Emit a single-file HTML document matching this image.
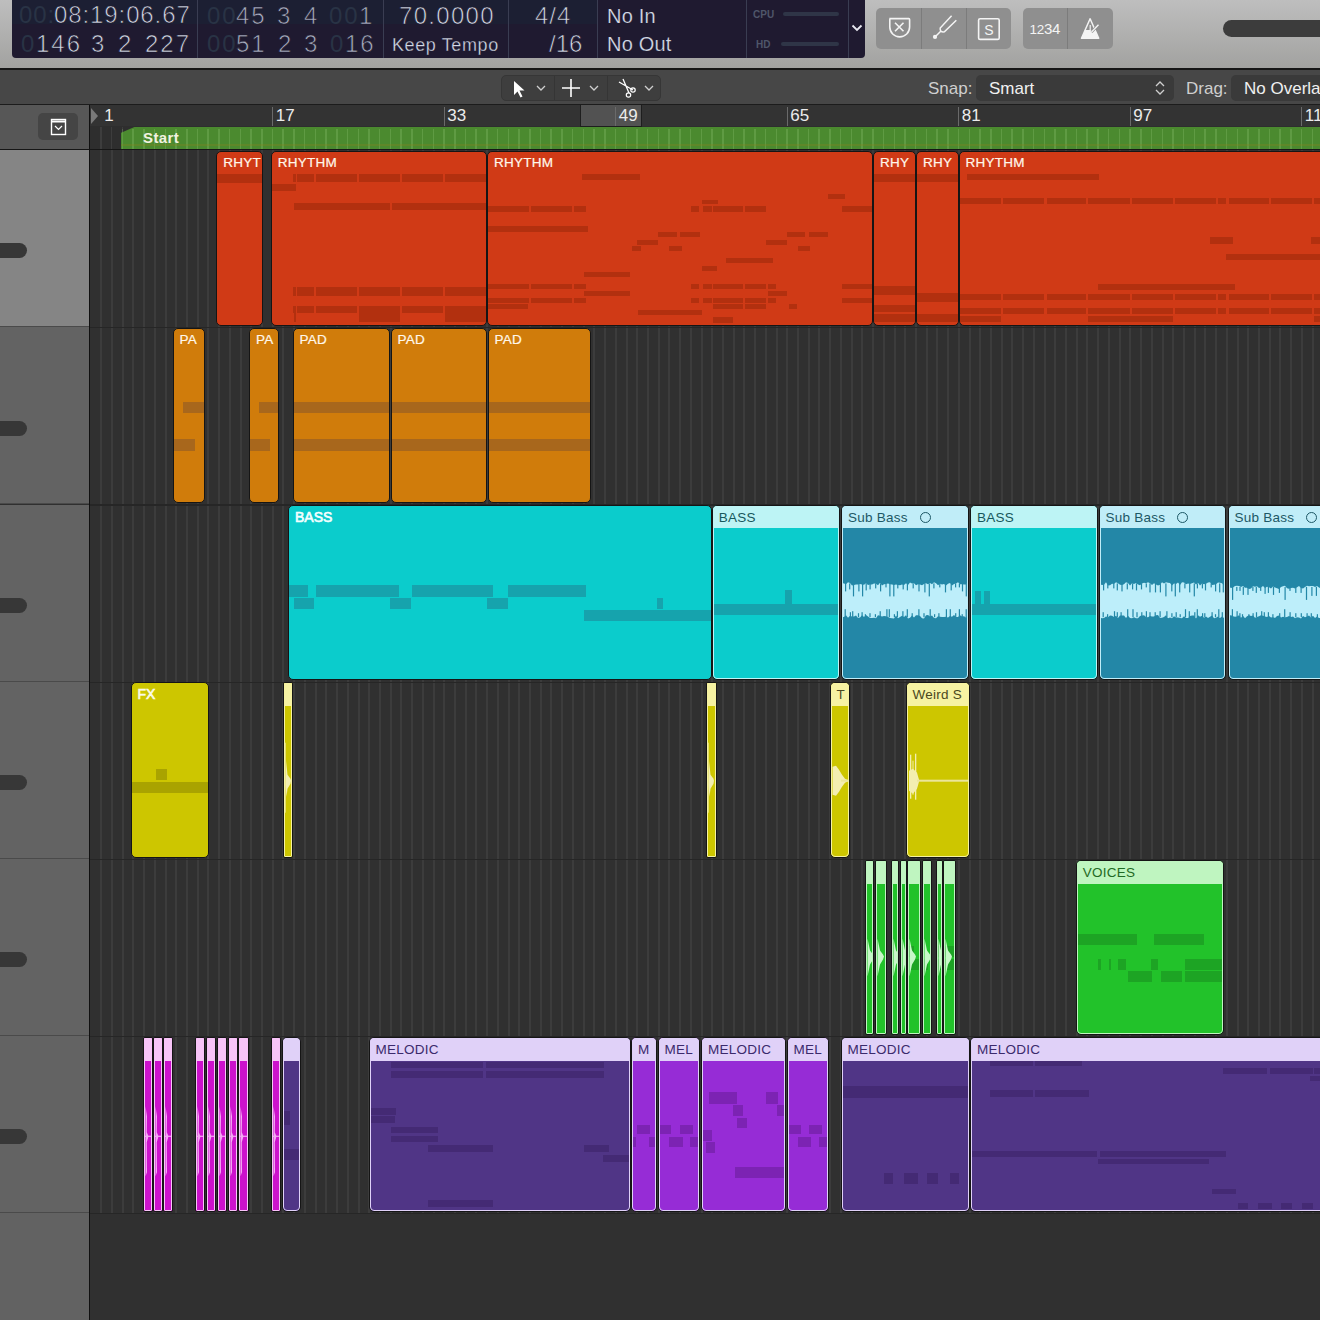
<!DOCTYPE html><html><head><meta charset="utf-8"><style>
*{margin:0;padding:0;box-sizing:border-box}
html,body{width:1320px;height:1320px;overflow:hidden;background:#303030;font-family:"Liberation Sans",sans-serif}
.a{position:absolute}
.lcd{color:#cfd6e4;font-size:22px;white-space:pre;line-height:1;-webkit-text-stroke:0.7px #1e1a30}
.dim{color:#2b3547}
.reg{position:absolute;border:1px solid #141414;border-radius:5px;overflow:hidden}
.rt{position:absolute;left:6px;top:3px;font-size:13.5px;letter-spacing:0.25px;line-height:16px;white-space:nowrap;-webkit-text-stroke:0.2px currentColor}
.hd .rt{top:4px;-webkit-text-stroke:0}
.n{position:absolute}
</style></head><body>
<div class="a" style="left:0;top:0;width:1320px;height:68px;background:linear-gradient(#bebebe,#a2a2a0)"></div>
<div class="a" style="left:0;top:68px;width:1320px;height:2px;background:#161616"></div>
<div class="a" style="left:12px;top:0;width:853px;height:58px;background:#1f1a30;border-radius:0 0 4px 4px"></div>
<div class="a" style="left:12px;top:0;width:585px;height:24px;background:#1c1f33"></div>
<div class="a" style="left:197px;top:0;width:1px;height:58px;background:#3a3d52"></div>
<div class="a" style="left:383px;top:0;width:1px;height:58px;background:#3a3d52"></div>
<div class="a" style="left:508px;top:0;width:1px;height:58px;background:#3a3d52"></div>
<div class="a" style="left:597px;top:0;width:1px;height:58px;background:#3a3d52"></div>
<div class="a" style="left:746px;top:0;width:1px;height:58px;background:#3a3d52"></div>
<div class="a" style="left:848px;top:0;width:1px;height:58px;background:#3a3d52"></div>
<div class="a lcd" style="left:19px;top:3px;font-size:24px;letter-spacing:0.9px;color:#293345;-webkit-text-stroke:0px #1e1a30">00:</div>
<div class="a lcd" style="left:54px;top:3px;font-size:24px;letter-spacing:0.9px;color:#d3d9e6;-webkit-text-stroke:0.7px #1e1a30">08:19:06.67</div>
<div class="a lcd" style="left:21px;top:32px;font-size:24px;letter-spacing:1px;color:#293345;-webkit-text-stroke:0px #1e1a30">0</div>
<div class="a lcd" style="left:36px;top:32px;font-size:24px;letter-spacing:2px;color:#d3d9e6;-webkit-text-stroke:0.7px #1e1a30">146</div>
<div class="a lcd" style="left:91px;top:32px;font-size:24px;letter-spacing:1.0px;color:#d3d9e6;-webkit-text-stroke:0.7px #1e1a30">3</div>
<div class="a lcd" style="left:118px;top:32px;font-size:24px;letter-spacing:1.0px;color:#d3d9e6;-webkit-text-stroke:0.7px #1e1a30">2</div>
<div class="a lcd" style="left:145px;top:32px;font-size:24px;letter-spacing:2px;color:#d3d9e6;-webkit-text-stroke:0.7px #1e1a30">227</div>
<div class="a lcd" style="left:207px;top:4px;font-size:24px;letter-spacing:2px;color:#293345;-webkit-text-stroke:0px #1e1a30">00</div>
<div class="a lcd" style="left:236px;top:4px;font-size:24px;letter-spacing:2px;color:#a9afc2;-webkit-text-stroke:0.7px #1e1a30">45</div>
<div class="a lcd" style="left:277px;top:4px;font-size:24px;letter-spacing:1px;color:#a9afc2;-webkit-text-stroke:0.7px #1e1a30">3</div>
<div class="a lcd" style="left:304px;top:4px;font-size:24px;letter-spacing:1px;color:#a9afc2;-webkit-text-stroke:0.7px #1e1a30">4</div>
<div class="a lcd" style="left:329px;top:4px;font-size:24px;letter-spacing:2px;color:#293345;-webkit-text-stroke:0px #1e1a30">00</div>
<div class="a lcd" style="left:359px;top:4px;font-size:24px;letter-spacing:1px;color:#a9afc2;-webkit-text-stroke:0.7px #1e1a30">1</div>
<div class="a lcd" style="left:207px;top:32px;font-size:24px;letter-spacing:2px;color:#293345;-webkit-text-stroke:0px #1e1a30">00</div>
<div class="a lcd" style="left:236px;top:32px;font-size:24px;letter-spacing:2px;color:#a9afc2;-webkit-text-stroke:0.7px #1e1a30">51</div>
<div class="a lcd" style="left:278px;top:32px;font-size:24px;letter-spacing:1px;color:#a9afc2;-webkit-text-stroke:0.7px #1e1a30">2</div>
<div class="a lcd" style="left:304px;top:32px;font-size:24px;letter-spacing:1px;color:#a9afc2;-webkit-text-stroke:0.7px #1e1a30">3</div>
<div class="a lcd" style="left:330px;top:32px;font-size:24px;letter-spacing:1px;color:#293345;-webkit-text-stroke:0px #1e1a30">0</div>
<div class="a lcd" style="left:345px;top:32px;font-size:24px;letter-spacing:2px;color:#a9afc2;-webkit-text-stroke:0.7px #1e1a30">16</div>
<div class="a lcd" style="left:399px;top:4px;font-size:24px;letter-spacing:1.3px;color:#d3d9e6;-webkit-text-stroke:0.7px #1e1a30">70.0000</div>
<div class="a lcd" style="left:392px;top:36px;font-size:18px;letter-spacing:0.6px;color:#d3d9e6;-webkit-text-stroke:0.3px #1e1a30">Keep Tempo</div>
<div class="a lcd" style="left:535px;top:4px;font-size:24px;letter-spacing:1px;color:#d3d9e6;-webkit-text-stroke:0.7px #1e1a30">4/4</div>
<div class="a lcd" style="left:549px;top:32px;font-size:24px;letter-spacing:0px;color:#d3d9e6;-webkit-text-stroke:0.7px #1e1a30">/16</div>
<div class="a lcd" style="left:607px;top:6px;font-size:20px;letter-spacing:0.2px;color:#d3d9e6;-webkit-text-stroke:0.2px #1e1a30">No In</div>
<div class="a lcd" style="left:607px;top:34px;font-size:20px;letter-spacing:0.2px;color:#d3d9e6;-webkit-text-stroke:0.2px #1e1a30">No Out</div>
<div class="a" style="left:753px;top:9px;font-size:10px;color:#4f566a;font-weight:bold">CPU</div>
<div class="a" style="left:756px;top:39px;font-size:10px;color:#4f566a;font-weight:bold">HD</div>
<div class="a" style="left:783px;top:12px;width:56px;height:4px;background:#2f3547;border-radius:2px"></div>
<div class="a" style="left:781px;top:42px;width:58px;height:4px;background:#2f3547;border-radius:2px"></div>
<svg class="a" style="left:851px;top:23px" width="12" height="10"><path d="M1.5 2.5 L6 7 L10.5 2.5" stroke="#e8e8f0" stroke-width="1.8" fill="none"/></svg>
<div class="a" style="left:876px;top:8px;width:135px;height:41px;background:#8f8f8f;border-radius:5px"></div>
<div class="a" style="left:1023px;top:8px;width:90px;height:41px;background:#8f8f8f;border-radius:5px"></div>
<div class="a" style="left:921px;top:8px;width:1px;height:41px;background:#7c7c7c"></div>
<div class="a" style="left:966px;top:8px;width:1px;height:41px;background:#7c7c7c"></div>
<div class="a" style="left:1067px;top:8px;width:1px;height:41px;background:#7c7c7c"></div>
<svg class="a" style="left:876px;top:8px" width="237" height="41">
<path d="M13.3 10.6 h19.5 q0.8 0 0.8 0.8 v7.6 a9.9 9.9 0 0 1 -19.8 0 v-7.6 q0 -0.8 0.8 -0.8 z" stroke="#f4f4f4" stroke-width="1.6" fill="none"/>
<path d="M19 14.8 l8.5 8.5 M27.5 14.8 l-8.5 8.5" stroke="#f4f4f4" stroke-width="1.6"/>
<circle cx="59" cy="28.9" r="2.1" fill="#f4f4f4"/>
<path d="M59 29 L65.2 22.8" stroke="#f4f4f4" stroke-width="1.5"/>
<path d="M75.6 7.8 L64.2 20 Q63.6 24.6 68.4 23.8 L80.3 12.2" stroke="#f4f4f4" stroke-width="1.5" fill="none"/>
<rect x="102.6" y="10.8" width="20.6" height="20.6" rx="1.5" stroke="#f4f4f4" stroke-width="1.6" fill="none"/>
<text x="113" y="26.5" font-size="14" text-anchor="middle" fill="#f4f4f4" font-family="Liberation Sans">S</text>
<text x="153.5" y="26" font-size="15" letter-spacing="-0.3" fill="#f4f4f4" font-family="Liberation Sans"><tspan font-size="13.5">12</tspan>34</text>
<path d="M214.1 10.8 L205.5 30.2 L222.7 30.2 Z" stroke="#f4f4f4" stroke-width="1.5" fill="none" stroke-linejoin="round"/>
<path d="M209.2 22 L219 22 L222.7 30.4 L205.5 30.4 Z" fill="#f4f4f4"/>
<path d="M214.2 17 v5" stroke="#f4f4f4" stroke-width="1.2"/>
<path d="M215.5 24 L222.5 16.8" stroke="#8f8f8f" stroke-width="2.6"/>
<path d="M215.5 24 L222.5 16.8" stroke="#f4f4f4" stroke-width="1.4"/>
</svg>
<div class="a" style="left:1223px;top:20px;width:120px;height:17px;background:#3c3c3c;border-radius:8.5px"></div>
<div class="a" style="left:0;top:70px;width:1320px;height:35px;background:#474747"></div>
<div class="a" style="left:0;top:104px;width:1320px;height:1px;background:#1c1c1c"></div>
<div class="a" style="left:501px;top:75px;width:160px;height:26px;background:#3e3e3e;border-radius:5px;border:1px solid #363636"></div>
<div class="a" style="left:554px;top:76px;width:1px;height:24px;background:#353535"></div>
<div class="a" style="left:607px;top:76px;width:1px;height:24px;background:#353535"></div>
<svg class="a" style="left:501px;top:75px" width="160" height="26">
<path d="M13 6 v14 l3.5 -3.5 l3 6 l2 -1 l-3 -6 h5 z" fill="#fff"/>
<path d="M36 11 l4 4 l4 -4" stroke="#cfcfcf" stroke-width="1.3" fill="none"/>
<path d="M70 4 v18 M61 13 h18" stroke="#fff" stroke-width="1.6"/>
<path d="M89 11 l4 4 l4 -4" stroke="#cfcfcf" stroke-width="1.3" fill="none"/>
<path d="M118 7 l14 8 M122 4 l6 14" stroke="#fff" stroke-width="1.3"/>
<circle cx="132" cy="15" r="2.2" stroke="#fff" stroke-width="1.2" fill="none"/>
<circle cx="127.5" cy="20" r="2.2" stroke="#fff" stroke-width="1.2" fill="none"/>
<path d="M144 11 l4 4 l4 -4" stroke="#cfcfcf" stroke-width="1.3" fill="none"/>
</svg>
<div class="a" style="left:928px;top:79px;font-size:17px;color:#cfcfcf">Snap:</div>
<div class="a" style="left:976px;top:75px;width:198px;height:26px;background:#3a3a3a;border-radius:5px"></div>
<div class="a" style="left:989px;top:79px;font-size:17px;color:#f0f0f0">Smart</div>
<svg class="a" style="left:1153px;top:79px" width="14" height="18"><path d="M3 7 l4 -4 l4 4 M3 11 l4 4 l4 -4" stroke="#cfcfcf" stroke-width="1.3" fill="none"/></svg>
<div class="a" style="left:1186px;top:79px;font-size:17px;color:#cfcfcf">Drag:</div>
<div class="a" style="left:1231px;top:75px;width:120px;height:26px;background:#3a3a3a;border-radius:5px"></div>
<div class="a" style="left:1244px;top:79px;font-size:17px;color:#f0f0f0;white-space:nowrap">No Overlap</div>
<div class="a" style="left:0;top:105px;width:89px;height:45px;background:#575757"></div>
<div class="a" style="left:38px;top:113px;width:40px;height:27px;background:#454545;border-radius:5px"></div>
<svg class="a" style="left:38px;top:113px" width="40" height="27"><rect x="13.5" y="6.5" width="14" height="15" stroke="#fff" stroke-width="1.4" fill="none"/><path d="M13.5 8.5 h14" stroke="#fff" stroke-width="2"/><path d="M17 13 l3.5 3.5 l3.5 -3.5" stroke="#fff" stroke-width="1.2" fill="none"/></svg>
<div class="a" style="left:89px;top:105px;width:1px;height:1215px;background:#101010"></div>
<div class="a" style="left:0;top:149px;width:1320px;height:1px;background:#161616"></div>
<div class="a" style="left:0;top:150.1px;width:89px;height:177.2px;background:#858585"></div>
<div class="a" style="left:0;top:326.1px;width:89px;height:1.2px;background:#4a4a4a"></div>
<div class="a" style="left:-8px;top:243.3px;width:35px;height:15px;background:#373737;border-radius:7.5px"></div>
<div class="a" style="left:0;top:327.3px;width:89px;height:177.2px;background:#636363"></div>
<div class="a" style="left:0;top:503.3px;width:89px;height:1.2px;background:#4a4a4a"></div>
<div class="a" style="left:-8px;top:420.5px;width:35px;height:15px;background:#373737;border-radius:7.5px"></div>
<div class="a" style="left:0;top:504.5px;width:89px;height:177.2px;background:#636363"></div>
<div class="a" style="left:0;top:680.5px;width:89px;height:1.2px;background:#4a4a4a"></div>
<div class="a" style="left:-8px;top:597.7px;width:35px;height:15px;background:#373737;border-radius:7.5px"></div>
<div class="a" style="left:0;top:681.7px;width:89px;height:177.2px;background:#636363"></div>
<div class="a" style="left:0;top:857.7px;width:89px;height:1.2px;background:#4a4a4a"></div>
<div class="a" style="left:-8px;top:774.9px;width:35px;height:15px;background:#373737;border-radius:7.5px"></div>
<div class="a" style="left:0;top:858.9px;width:89px;height:177.2px;background:#636363"></div>
<div class="a" style="left:0;top:1034.9px;width:89px;height:1.2px;background:#4a4a4a"></div>
<div class="a" style="left:-8px;top:952.1px;width:35px;height:15px;background:#373737;border-radius:7.5px"></div>
<div class="a" style="left:0;top:1036.1px;width:89px;height:177.2px;background:#636363"></div>
<div class="a" style="left:0;top:1212.1px;width:89px;height:1.2px;background:#4a4a4a"></div>
<div class="a" style="left:-8px;top:1129.3px;width:35px;height:15px;background:#373737;border-radius:7.5px"></div>
<div class="a" style="left:0;top:1213.3px;width:89px;height:200px;background:#626262"></div>
<div class="a" style="left:90px;top:105px;width:1230px;height:21px;background:#333333"></div>
<div class="a" style="left:90px;top:126px;width:1230px;height:23px;background:#2e2e2e"></div>
<div class="a" style="left:100.2px;top:127px;width:1.5px;height:22px;background:#3d3d3d"></div><div class="a" style="left:110.9px;top:127px;width:1.5px;height:22px;background:#3d3d3d"></div><div class="a" style="left:121.6px;top:127px;width:1.5px;height:22px;background:#3d3d3d"></div>
<div class="a" style="left:580px;top:105px;width:62px;height:22px;background:#525252;border:1px solid #1e1e1e;border-top:none"></div>
<div class="a" style="left:104.2px;top:105.6px;font-size:17px;line-height:20px;color:#ececec">1</div>
<div class="a" style="left:272.2px;top:107px;width:1px;height:19px;background:#6a6a6a"></div>
<div class="a" style="left:275.7px;top:105.6px;font-size:17px;line-height:20px;color:#ececec">17</div>
<div class="a" style="left:443.7px;top:107px;width:1px;height:19px;background:#6a6a6a"></div>
<div class="a" style="left:447.2px;top:105.6px;font-size:17px;line-height:20px;color:#ececec">33</div>
<div class="a" style="left:615.3px;top:107px;width:1px;height:19px;background:#6a6a6a"></div>
<div class="a" style="left:618.8px;top:105.6px;font-size:17px;line-height:20px;color:#ececec">49</div>
<div class="a" style="left:786.8px;top:107px;width:1px;height:19px;background:#6a6a6a"></div>
<div class="a" style="left:790.3px;top:105.6px;font-size:17px;line-height:20px;color:#ececec">65</div>
<div class="a" style="left:958.3px;top:107px;width:1px;height:19px;background:#6a6a6a"></div>
<div class="a" style="left:961.8px;top:105.6px;font-size:17px;line-height:20px;color:#ececec">81</div>
<div class="a" style="left:1129.8px;top:107px;width:1px;height:19px;background:#6a6a6a"></div>
<div class="a" style="left:1133.3px;top:105.6px;font-size:17px;line-height:20px;color:#ececec">97</div>
<div class="a" style="left:1301.3px;top:107px;width:1px;height:19px;background:#6a6a6a"></div>
<div class="a" style="left:1304.8px;top:105.6px;font-size:17px;line-height:20px;color:#ececec">113</div>
<svg class="a" style="left:90px;top:107px" width="10" height="18"><path d="M1 1 L8 9 L1 17 z" fill="#7a7a7a"/></svg>
<div class="a" style="left:120.5px;top:126.5px;width:1200px;height:22.5px;background:#4b8a2f;clip-path:polygon(0 6.5px,15px 0,100% 0,100% 100%,0 100%)"></div>
<div class="a" style="left:121.6px;top:129px;width:1.5px;height:20px;background:rgba(170,220,140,0.22)"></div><div class="a" style="left:132.4px;top:129px;width:1.5px;height:20px;background:rgba(170,220,140,0.22)"></div><div class="a" style="left:143.1px;top:129px;width:1.5px;height:20px;background:rgba(170,220,140,0.22)"></div><div class="a" style="left:153.8px;top:129px;width:1.5px;height:20px;background:rgba(170,220,140,0.22)"></div><div class="a" style="left:164.5px;top:129px;width:1.5px;height:20px;background:rgba(170,220,140,0.22)"></div><div class="a" style="left:175.2px;top:129px;width:1.5px;height:20px;background:rgba(170,220,140,0.22)"></div><div class="a" style="left:186.0px;top:129px;width:1.5px;height:20px;background:rgba(170,220,140,0.22)"></div><div class="a" style="left:196.7px;top:129px;width:1.5px;height:20px;background:rgba(170,220,140,0.22)"></div><div class="a" style="left:207.4px;top:129px;width:1.5px;height:20px;background:rgba(170,220,140,0.22)"></div><div class="a" style="left:218.1px;top:129px;width:1.5px;height:20px;background:rgba(170,220,140,0.22)"></div><div class="a" style="left:228.8px;top:129px;width:1.5px;height:20px;background:rgba(170,220,140,0.22)"></div><div class="a" style="left:239.6px;top:129px;width:1.5px;height:20px;background:rgba(170,220,140,0.22)"></div><div class="a" style="left:250.3px;top:129px;width:1.5px;height:20px;background:rgba(170,220,140,0.22)"></div><div class="a" style="left:261.0px;top:129px;width:1.5px;height:20px;background:rgba(170,220,140,0.22)"></div><div class="a" style="left:271.7px;top:129px;width:1.5px;height:20px;background:rgba(170,220,140,0.22)"></div><div class="a" style="left:282.4px;top:129px;width:1.5px;height:20px;background:rgba(170,220,140,0.22)"></div><div class="a" style="left:293.2px;top:129px;width:1.5px;height:20px;background:rgba(170,220,140,0.22)"></div><div class="a" style="left:303.9px;top:129px;width:1.5px;height:20px;background:rgba(170,220,140,0.22)"></div><div class="a" style="left:314.6px;top:129px;width:1.5px;height:20px;background:rgba(170,220,140,0.22)"></div><div class="a" style="left:325.3px;top:129px;width:1.5px;height:20px;background:rgba(170,220,140,0.22)"></div><div class="a" style="left:336.0px;top:129px;width:1.5px;height:20px;background:rgba(170,220,140,0.22)"></div><div class="a" style="left:346.8px;top:129px;width:1.5px;height:20px;background:rgba(170,220,140,0.22)"></div><div class="a" style="left:357.5px;top:129px;width:1.5px;height:20px;background:rgba(170,220,140,0.22)"></div><div class="a" style="left:368.2px;top:129px;width:1.5px;height:20px;background:rgba(170,220,140,0.22)"></div><div class="a" style="left:378.9px;top:129px;width:1.5px;height:20px;background:rgba(170,220,140,0.22)"></div><div class="a" style="left:389.6px;top:129px;width:1.5px;height:20px;background:rgba(170,220,140,0.22)"></div><div class="a" style="left:400.4px;top:129px;width:1.5px;height:20px;background:rgba(170,220,140,0.22)"></div><div class="a" style="left:411.1px;top:129px;width:1.5px;height:20px;background:rgba(170,220,140,0.22)"></div><div class="a" style="left:421.8px;top:129px;width:1.5px;height:20px;background:rgba(170,220,140,0.22)"></div><div class="a" style="left:432.5px;top:129px;width:1.5px;height:20px;background:rgba(170,220,140,0.22)"></div><div class="a" style="left:443.2px;top:129px;width:1.5px;height:20px;background:rgba(170,220,140,0.22)"></div><div class="a" style="left:454.0px;top:129px;width:1.5px;height:20px;background:rgba(170,220,140,0.22)"></div><div class="a" style="left:464.7px;top:129px;width:1.5px;height:20px;background:rgba(170,220,140,0.22)"></div><div class="a" style="left:475.4px;top:129px;width:1.5px;height:20px;background:rgba(170,220,140,0.22)"></div><div class="a" style="left:486.1px;top:129px;width:1.5px;height:20px;background:rgba(170,220,140,0.22)"></div><div class="a" style="left:496.8px;top:129px;width:1.5px;height:20px;background:rgba(170,220,140,0.22)"></div><div class="a" style="left:507.6px;top:129px;width:1.5px;height:20px;background:rgba(170,220,140,0.22)"></div><div class="a" style="left:518.3px;top:129px;width:1.5px;height:20px;background:rgba(170,220,140,0.22)"></div><div class="a" style="left:529.0px;top:129px;width:1.5px;height:20px;background:rgba(170,220,140,0.22)"></div><div class="a" style="left:539.7px;top:129px;width:1.5px;height:20px;background:rgba(170,220,140,0.22)"></div><div class="a" style="left:550.4px;top:129px;width:1.5px;height:20px;background:rgba(170,220,140,0.22)"></div><div class="a" style="left:561.2px;top:129px;width:1.5px;height:20px;background:rgba(170,220,140,0.22)"></div><div class="a" style="left:571.9px;top:129px;width:1.5px;height:20px;background:rgba(170,220,140,0.22)"></div><div class="a" style="left:582.6px;top:129px;width:1.5px;height:20px;background:rgba(170,220,140,0.22)"></div><div class="a" style="left:593.3px;top:129px;width:1.5px;height:20px;background:rgba(170,220,140,0.22)"></div><div class="a" style="left:604.0px;top:129px;width:1.5px;height:20px;background:rgba(170,220,140,0.22)"></div><div class="a" style="left:614.8px;top:129px;width:1.5px;height:20px;background:rgba(170,220,140,0.22)"></div><div class="a" style="left:625.5px;top:129px;width:1.5px;height:20px;background:rgba(170,220,140,0.22)"></div><div class="a" style="left:636.2px;top:129px;width:1.5px;height:20px;background:rgba(170,220,140,0.22)"></div><div class="a" style="left:646.9px;top:129px;width:1.5px;height:20px;background:rgba(170,220,140,0.22)"></div><div class="a" style="left:657.6px;top:129px;width:1.5px;height:20px;background:rgba(170,220,140,0.22)"></div><div class="a" style="left:668.4px;top:129px;width:1.5px;height:20px;background:rgba(170,220,140,0.22)"></div><div class="a" style="left:679.1px;top:129px;width:1.5px;height:20px;background:rgba(170,220,140,0.22)"></div><div class="a" style="left:689.8px;top:129px;width:1.5px;height:20px;background:rgba(170,220,140,0.22)"></div><div class="a" style="left:700.5px;top:129px;width:1.5px;height:20px;background:rgba(170,220,140,0.22)"></div><div class="a" style="left:711.2px;top:129px;width:1.5px;height:20px;background:rgba(170,220,140,0.22)"></div><div class="a" style="left:722.0px;top:129px;width:1.5px;height:20px;background:rgba(170,220,140,0.22)"></div><div class="a" style="left:732.7px;top:129px;width:1.5px;height:20px;background:rgba(170,220,140,0.22)"></div><div class="a" style="left:743.4px;top:129px;width:1.5px;height:20px;background:rgba(170,220,140,0.22)"></div><div class="a" style="left:754.1px;top:129px;width:1.5px;height:20px;background:rgba(170,220,140,0.22)"></div><div class="a" style="left:764.8px;top:129px;width:1.5px;height:20px;background:rgba(170,220,140,0.22)"></div><div class="a" style="left:775.6px;top:129px;width:1.5px;height:20px;background:rgba(170,220,140,0.22)"></div><div class="a" style="left:786.3px;top:129px;width:1.5px;height:20px;background:rgba(170,220,140,0.22)"></div><div class="a" style="left:797.0px;top:129px;width:1.5px;height:20px;background:rgba(170,220,140,0.22)"></div><div class="a" style="left:807.7px;top:129px;width:1.5px;height:20px;background:rgba(170,220,140,0.22)"></div><div class="a" style="left:818.4px;top:129px;width:1.5px;height:20px;background:rgba(170,220,140,0.22)"></div><div class="a" style="left:829.2px;top:129px;width:1.5px;height:20px;background:rgba(170,220,140,0.22)"></div><div class="a" style="left:839.9px;top:129px;width:1.5px;height:20px;background:rgba(170,220,140,0.22)"></div><div class="a" style="left:850.6px;top:129px;width:1.5px;height:20px;background:rgba(170,220,140,0.22)"></div><div class="a" style="left:861.3px;top:129px;width:1.5px;height:20px;background:rgba(170,220,140,0.22)"></div><div class="a" style="left:872.0px;top:129px;width:1.5px;height:20px;background:rgba(170,220,140,0.22)"></div><div class="a" style="left:882.8px;top:129px;width:1.5px;height:20px;background:rgba(170,220,140,0.22)"></div><div class="a" style="left:893.5px;top:129px;width:1.5px;height:20px;background:rgba(170,220,140,0.22)"></div><div class="a" style="left:904.2px;top:129px;width:1.5px;height:20px;background:rgba(170,220,140,0.22)"></div><div class="a" style="left:914.9px;top:129px;width:1.5px;height:20px;background:rgba(170,220,140,0.22)"></div><div class="a" style="left:925.6px;top:129px;width:1.5px;height:20px;background:rgba(170,220,140,0.22)"></div><div class="a" style="left:936.4px;top:129px;width:1.5px;height:20px;background:rgba(170,220,140,0.22)"></div><div class="a" style="left:947.1px;top:129px;width:1.5px;height:20px;background:rgba(170,220,140,0.22)"></div><div class="a" style="left:957.8px;top:129px;width:1.5px;height:20px;background:rgba(170,220,140,0.22)"></div><div class="a" style="left:968.5px;top:129px;width:1.5px;height:20px;background:rgba(170,220,140,0.22)"></div><div class="a" style="left:979.2px;top:129px;width:1.5px;height:20px;background:rgba(170,220,140,0.22)"></div><div class="a" style="left:990.0px;top:129px;width:1.5px;height:20px;background:rgba(170,220,140,0.22)"></div><div class="a" style="left:1000.7px;top:129px;width:1.5px;height:20px;background:rgba(170,220,140,0.22)"></div><div class="a" style="left:1011.4px;top:129px;width:1.5px;height:20px;background:rgba(170,220,140,0.22)"></div><div class="a" style="left:1022.1px;top:129px;width:1.5px;height:20px;background:rgba(170,220,140,0.22)"></div><div class="a" style="left:1032.8px;top:129px;width:1.5px;height:20px;background:rgba(170,220,140,0.22)"></div><div class="a" style="left:1043.6px;top:129px;width:1.5px;height:20px;background:rgba(170,220,140,0.22)"></div><div class="a" style="left:1054.3px;top:129px;width:1.5px;height:20px;background:rgba(170,220,140,0.22)"></div><div class="a" style="left:1065.0px;top:129px;width:1.5px;height:20px;background:rgba(170,220,140,0.22)"></div><div class="a" style="left:1075.7px;top:129px;width:1.5px;height:20px;background:rgba(170,220,140,0.22)"></div><div class="a" style="left:1086.4px;top:129px;width:1.5px;height:20px;background:rgba(170,220,140,0.22)"></div><div class="a" style="left:1097.2px;top:129px;width:1.5px;height:20px;background:rgba(170,220,140,0.22)"></div><div class="a" style="left:1107.9px;top:129px;width:1.5px;height:20px;background:rgba(170,220,140,0.22)"></div><div class="a" style="left:1118.6px;top:129px;width:1.5px;height:20px;background:rgba(170,220,140,0.22)"></div><div class="a" style="left:1129.3px;top:129px;width:1.5px;height:20px;background:rgba(170,220,140,0.22)"></div><div class="a" style="left:1140.0px;top:129px;width:1.5px;height:20px;background:rgba(170,220,140,0.22)"></div><div class="a" style="left:1150.8px;top:129px;width:1.5px;height:20px;background:rgba(170,220,140,0.22)"></div><div class="a" style="left:1161.5px;top:129px;width:1.5px;height:20px;background:rgba(170,220,140,0.22)"></div><div class="a" style="left:1172.2px;top:129px;width:1.5px;height:20px;background:rgba(170,220,140,0.22)"></div><div class="a" style="left:1182.9px;top:129px;width:1.5px;height:20px;background:rgba(170,220,140,0.22)"></div><div class="a" style="left:1193.6px;top:129px;width:1.5px;height:20px;background:rgba(170,220,140,0.22)"></div><div class="a" style="left:1204.4px;top:129px;width:1.5px;height:20px;background:rgba(170,220,140,0.22)"></div><div class="a" style="left:1215.1px;top:129px;width:1.5px;height:20px;background:rgba(170,220,140,0.22)"></div><div class="a" style="left:1225.8px;top:129px;width:1.5px;height:20px;background:rgba(170,220,140,0.22)"></div><div class="a" style="left:1236.5px;top:129px;width:1.5px;height:20px;background:rgba(170,220,140,0.22)"></div><div class="a" style="left:1247.2px;top:129px;width:1.5px;height:20px;background:rgba(170,220,140,0.22)"></div><div class="a" style="left:1258.0px;top:129px;width:1.5px;height:20px;background:rgba(170,220,140,0.22)"></div><div class="a" style="left:1268.7px;top:129px;width:1.5px;height:20px;background:rgba(170,220,140,0.22)"></div><div class="a" style="left:1279.4px;top:129px;width:1.5px;height:20px;background:rgba(170,220,140,0.22)"></div><div class="a" style="left:1290.1px;top:129px;width:1.5px;height:20px;background:rgba(170,220,140,0.22)"></div><div class="a" style="left:1300.8px;top:129px;width:1.5px;height:20px;background:rgba(170,220,140,0.22)"></div><div class="a" style="left:1311.6px;top:129px;width:1.5px;height:20px;background:rgba(170,220,140,0.22)"></div><div class="a" style="left:1322.3px;top:129px;width:1.5px;height:20px;background:rgba(170,220,140,0.22)"></div><div class="a" style="left:1333.0px;top:129px;width:1.5px;height:20px;background:rgba(170,220,140,0.22)"></div>
<div class="a" style="left:121px;top:144px;width:1199px;height:1.5px;background:rgba(140,130,30,0.3)"></div>
<div class="a" style="left:143px;top:129px;font-size:15px;letter-spacing:0.4px;font-weight:bold;color:#f2f2e0;line-height:18px">Start</div>
<div class="a" style="left:100.2px;top:150px;width:2px;height:1063px;background:#3c3c3c"></div><div class="a" style="left:110.9px;top:150px;width:2px;height:1063px;background:#3c3c3c"></div><div class="a" style="left:121.6px;top:150px;width:2px;height:1063px;background:#3c3c3c"></div><div class="a" style="left:132.4px;top:150px;width:2px;height:1063px;background:#3c3c3c"></div><div class="a" style="left:143.1px;top:150px;width:2px;height:1063px;background:#3c3c3c"></div><div class="a" style="left:153.8px;top:150px;width:2px;height:1063px;background:#3c3c3c"></div><div class="a" style="left:164.5px;top:150px;width:2px;height:1063px;background:#3c3c3c"></div><div class="a" style="left:175.2px;top:150px;width:2px;height:1063px;background:#3c3c3c"></div><div class="a" style="left:186.0px;top:150px;width:2px;height:1063px;background:#3c3c3c"></div><div class="a" style="left:196.7px;top:150px;width:2px;height:1063px;background:#3c3c3c"></div><div class="a" style="left:207.4px;top:150px;width:2px;height:1063px;background:#3c3c3c"></div><div class="a" style="left:218.1px;top:150px;width:2px;height:1063px;background:#3c3c3c"></div><div class="a" style="left:228.8px;top:150px;width:2px;height:1063px;background:#3c3c3c"></div><div class="a" style="left:239.6px;top:150px;width:2px;height:1063px;background:#3c3c3c"></div><div class="a" style="left:250.3px;top:150px;width:2px;height:1063px;background:#3c3c3c"></div><div class="a" style="left:261.0px;top:150px;width:2px;height:1063px;background:#3c3c3c"></div><div class="a" style="left:271.7px;top:150px;width:2px;height:1063px;background:#3c3c3c"></div><div class="a" style="left:282.4px;top:150px;width:2px;height:1063px;background:#3c3c3c"></div><div class="a" style="left:293.2px;top:150px;width:2px;height:1063px;background:#3c3c3c"></div><div class="a" style="left:303.9px;top:150px;width:2px;height:1063px;background:#3c3c3c"></div><div class="a" style="left:314.6px;top:150px;width:2px;height:1063px;background:#3c3c3c"></div><div class="a" style="left:325.3px;top:150px;width:2px;height:1063px;background:#3c3c3c"></div><div class="a" style="left:336.0px;top:150px;width:2px;height:1063px;background:#3c3c3c"></div><div class="a" style="left:346.8px;top:150px;width:2px;height:1063px;background:#3c3c3c"></div><div class="a" style="left:357.5px;top:150px;width:2px;height:1063px;background:#3c3c3c"></div><div class="a" style="left:368.2px;top:150px;width:2px;height:1063px;background:#3c3c3c"></div><div class="a" style="left:378.9px;top:150px;width:2px;height:1063px;background:#3c3c3c"></div><div class="a" style="left:389.6px;top:150px;width:2px;height:1063px;background:#3c3c3c"></div><div class="a" style="left:400.4px;top:150px;width:2px;height:1063px;background:#3c3c3c"></div><div class="a" style="left:411.1px;top:150px;width:2px;height:1063px;background:#3c3c3c"></div><div class="a" style="left:421.8px;top:150px;width:2px;height:1063px;background:#3c3c3c"></div><div class="a" style="left:432.5px;top:150px;width:2px;height:1063px;background:#3c3c3c"></div><div class="a" style="left:443.2px;top:150px;width:2px;height:1063px;background:#3c3c3c"></div><div class="a" style="left:454.0px;top:150px;width:2px;height:1063px;background:#3c3c3c"></div><div class="a" style="left:464.7px;top:150px;width:2px;height:1063px;background:#3c3c3c"></div><div class="a" style="left:475.4px;top:150px;width:2px;height:1063px;background:#3c3c3c"></div><div class="a" style="left:486.1px;top:150px;width:2px;height:1063px;background:#3c3c3c"></div><div class="a" style="left:496.8px;top:150px;width:2px;height:1063px;background:#3c3c3c"></div><div class="a" style="left:507.6px;top:150px;width:2px;height:1063px;background:#3c3c3c"></div><div class="a" style="left:518.3px;top:150px;width:2px;height:1063px;background:#3c3c3c"></div><div class="a" style="left:529.0px;top:150px;width:2px;height:1063px;background:#3c3c3c"></div><div class="a" style="left:539.7px;top:150px;width:2px;height:1063px;background:#3c3c3c"></div><div class="a" style="left:550.4px;top:150px;width:2px;height:1063px;background:#3c3c3c"></div><div class="a" style="left:561.2px;top:150px;width:2px;height:1063px;background:#3c3c3c"></div><div class="a" style="left:571.9px;top:150px;width:2px;height:1063px;background:#3c3c3c"></div><div class="a" style="left:582.6px;top:150px;width:2px;height:1063px;background:#3c3c3c"></div><div class="a" style="left:593.3px;top:150px;width:2px;height:1063px;background:#3c3c3c"></div><div class="a" style="left:604.0px;top:150px;width:2px;height:1063px;background:#3c3c3c"></div><div class="a" style="left:614.8px;top:150px;width:2px;height:1063px;background:#3c3c3c"></div><div class="a" style="left:625.5px;top:150px;width:2px;height:1063px;background:#3c3c3c"></div><div class="a" style="left:636.2px;top:150px;width:2px;height:1063px;background:#3c3c3c"></div><div class="a" style="left:646.9px;top:150px;width:2px;height:1063px;background:#3c3c3c"></div><div class="a" style="left:657.6px;top:150px;width:2px;height:1063px;background:#3c3c3c"></div><div class="a" style="left:668.4px;top:150px;width:2px;height:1063px;background:#3c3c3c"></div><div class="a" style="left:679.1px;top:150px;width:2px;height:1063px;background:#3c3c3c"></div><div class="a" style="left:689.8px;top:150px;width:2px;height:1063px;background:#3c3c3c"></div><div class="a" style="left:700.5px;top:150px;width:2px;height:1063px;background:#3c3c3c"></div><div class="a" style="left:711.2px;top:150px;width:2px;height:1063px;background:#3c3c3c"></div><div class="a" style="left:722.0px;top:150px;width:2px;height:1063px;background:#3c3c3c"></div><div class="a" style="left:732.7px;top:150px;width:2px;height:1063px;background:#3c3c3c"></div><div class="a" style="left:743.4px;top:150px;width:2px;height:1063px;background:#3c3c3c"></div><div class="a" style="left:754.1px;top:150px;width:2px;height:1063px;background:#3c3c3c"></div><div class="a" style="left:764.8px;top:150px;width:2px;height:1063px;background:#3c3c3c"></div><div class="a" style="left:775.6px;top:150px;width:2px;height:1063px;background:#3c3c3c"></div><div class="a" style="left:786.3px;top:150px;width:2px;height:1063px;background:#3c3c3c"></div><div class="a" style="left:797.0px;top:150px;width:2px;height:1063px;background:#3c3c3c"></div><div class="a" style="left:807.7px;top:150px;width:2px;height:1063px;background:#3c3c3c"></div><div class="a" style="left:818.4px;top:150px;width:2px;height:1063px;background:#3c3c3c"></div><div class="a" style="left:829.2px;top:150px;width:2px;height:1063px;background:#3c3c3c"></div><div class="a" style="left:839.9px;top:150px;width:2px;height:1063px;background:#3c3c3c"></div><div class="a" style="left:850.6px;top:150px;width:2px;height:1063px;background:#3c3c3c"></div><div class="a" style="left:861.3px;top:150px;width:2px;height:1063px;background:#3c3c3c"></div><div class="a" style="left:872.0px;top:150px;width:2px;height:1063px;background:#3c3c3c"></div><div class="a" style="left:882.8px;top:150px;width:2px;height:1063px;background:#3c3c3c"></div><div class="a" style="left:893.5px;top:150px;width:2px;height:1063px;background:#3c3c3c"></div><div class="a" style="left:904.2px;top:150px;width:2px;height:1063px;background:#3c3c3c"></div><div class="a" style="left:914.9px;top:150px;width:2px;height:1063px;background:#3c3c3c"></div><div class="a" style="left:925.6px;top:150px;width:2px;height:1063px;background:#3c3c3c"></div><div class="a" style="left:936.4px;top:150px;width:2px;height:1063px;background:#3c3c3c"></div><div class="a" style="left:947.1px;top:150px;width:2px;height:1063px;background:#3c3c3c"></div><div class="a" style="left:957.8px;top:150px;width:2px;height:1063px;background:#3c3c3c"></div><div class="a" style="left:968.5px;top:150px;width:2px;height:1063px;background:#3c3c3c"></div><div class="a" style="left:979.2px;top:150px;width:2px;height:1063px;background:#3c3c3c"></div><div class="a" style="left:990.0px;top:150px;width:2px;height:1063px;background:#3c3c3c"></div><div class="a" style="left:1000.7px;top:150px;width:2px;height:1063px;background:#3c3c3c"></div><div class="a" style="left:1011.4px;top:150px;width:2px;height:1063px;background:#3c3c3c"></div><div class="a" style="left:1022.1px;top:150px;width:2px;height:1063px;background:#3c3c3c"></div><div class="a" style="left:1032.8px;top:150px;width:2px;height:1063px;background:#3c3c3c"></div><div class="a" style="left:1043.6px;top:150px;width:2px;height:1063px;background:#3c3c3c"></div><div class="a" style="left:1054.3px;top:150px;width:2px;height:1063px;background:#3c3c3c"></div><div class="a" style="left:1065.0px;top:150px;width:2px;height:1063px;background:#3c3c3c"></div><div class="a" style="left:1075.7px;top:150px;width:2px;height:1063px;background:#3c3c3c"></div><div class="a" style="left:1086.4px;top:150px;width:2px;height:1063px;background:#3c3c3c"></div><div class="a" style="left:1097.2px;top:150px;width:2px;height:1063px;background:#3c3c3c"></div><div class="a" style="left:1107.9px;top:150px;width:2px;height:1063px;background:#3c3c3c"></div><div class="a" style="left:1118.6px;top:150px;width:2px;height:1063px;background:#3c3c3c"></div><div class="a" style="left:1129.3px;top:150px;width:2px;height:1063px;background:#3c3c3c"></div><div class="a" style="left:1140.0px;top:150px;width:2px;height:1063px;background:#3c3c3c"></div><div class="a" style="left:1150.8px;top:150px;width:2px;height:1063px;background:#3c3c3c"></div><div class="a" style="left:1161.5px;top:150px;width:2px;height:1063px;background:#3c3c3c"></div><div class="a" style="left:1172.2px;top:150px;width:2px;height:1063px;background:#3c3c3c"></div><div class="a" style="left:1182.9px;top:150px;width:2px;height:1063px;background:#3c3c3c"></div><div class="a" style="left:1193.6px;top:150px;width:2px;height:1063px;background:#3c3c3c"></div><div class="a" style="left:1204.4px;top:150px;width:2px;height:1063px;background:#3c3c3c"></div><div class="a" style="left:1215.1px;top:150px;width:2px;height:1063px;background:#3c3c3c"></div><div class="a" style="left:1225.8px;top:150px;width:2px;height:1063px;background:#3c3c3c"></div><div class="a" style="left:1236.5px;top:150px;width:2px;height:1063px;background:#3c3c3c"></div><div class="a" style="left:1247.2px;top:150px;width:2px;height:1063px;background:#3c3c3c"></div><div class="a" style="left:1258.0px;top:150px;width:2px;height:1063px;background:#3c3c3c"></div><div class="a" style="left:1268.7px;top:150px;width:2px;height:1063px;background:#3c3c3c"></div><div class="a" style="left:1279.4px;top:150px;width:2px;height:1063px;background:#3c3c3c"></div><div class="a" style="left:1290.1px;top:150px;width:2px;height:1063px;background:#3c3c3c"></div><div class="a" style="left:1300.8px;top:150px;width:2px;height:1063px;background:#3c3c3c"></div><div class="a" style="left:1311.6px;top:150px;width:2px;height:1063px;background:#3c3c3c"></div>
<div class="a" style="left:90px;top:327.2px;width:1230px;height:1.2px;background:#262626"></div>
<div class="a" style="left:90px;top:504.4px;width:1230px;height:1.2px;background:#262626"></div>
<div class="a" style="left:90px;top:681.6px;width:1230px;height:1.2px;background:#262626"></div>
<div class="a" style="left:90px;top:858.8px;width:1230px;height:1.2px;background:#262626"></div>
<div class="a" style="left:90px;top:1036.0px;width:1230px;height:1.2px;background:#262626"></div>
<div class="a" style="left:90px;top:1213.2px;width:1230px;height:1.2px;background:#262626"></div>
<div class="reg" style="left:216.3px;top:150.7px;width:47.2px;height:175.4px;background:#d03a16;border-color:#151515;"><div class="n" style="left:-0.3px;top:22.7px;width:46.0px;height:8.5px;background:#b2300f"></div><div class="rt" style="color:#fff7ea;">RHYT</div></div>
<div class="reg" style="left:270.8px;top:150.7px;width:216.2px;height:175.4px;background:#d03a16;border-color:#151515;"><div class="n" style="left:20.9px;top:22.7px;width:3.3px;height:7.6px;background:#b2300f"></div><div class="n" style="left:25.2px;top:22.7px;width:17.4px;height:7.6px;background:#b2300f"></div><div class="n" style="left:44.2px;top:22.7px;width:41.4px;height:7.6px;background:#b2300f"></div><div class="n" style="left:87.2px;top:22.7px;width:41.0px;height:7.6px;background:#b2300f"></div><div class="n" style="left:129.8px;top:22.7px;width:41.7px;height:7.6px;background:#b2300f"></div><div class="n" style="left:173.2px;top:22.7px;width:42.0px;height:7.6px;background:#b2300f"></div><div class="n" style="left:0.2px;top:32.3px;width:24.0px;height:7.4px;background:#b2300f"></div><div class="n" style="left:22.0px;top:50.9px;width:96.5px;height:7.9px;background:#b2300f"></div><div class="n" style="left:120.0px;top:50.9px;width:95.2px;height:7.9px;background:#b2300f"></div><div class="n" style="left:20.9px;top:135.1px;width:3.3px;height:9.2px;background:#b2300f"></div><div class="n" style="left:25.2px;top:135.1px;width:17.4px;height:9.2px;background:#b2300f"></div><div class="n" style="left:44.2px;top:135.1px;width:41.4px;height:9.2px;background:#b2300f"></div><div class="n" style="left:87.2px;top:135.1px;width:41.0px;height:9.2px;background:#b2300f"></div><div class="n" style="left:129.8px;top:135.1px;width:41.7px;height:9.2px;background:#b2300f"></div><div class="n" style="left:173.2px;top:135.1px;width:42.0px;height:9.2px;background:#b2300f"></div><div class="n" style="left:20.9px;top:154.3px;width:3.3px;height:7.3px;background:#b2300f"></div><div class="n" style="left:25.2px;top:154.3px;width:17.4px;height:7.3px;background:#b2300f"></div><div class="n" style="left:44.2px;top:154.3px;width:41.4px;height:7.3px;background:#b2300f"></div><div class="n" style="left:87.2px;top:154.3px;width:41.0px;height:7.3px;background:#b2300f"></div><div class="n" style="left:129.8px;top:154.3px;width:41.7px;height:7.3px;background:#b2300f"></div><div class="n" style="left:173.2px;top:154.3px;width:42.0px;height:7.3px;background:#b2300f"></div><div class="n" style="left:87.2px;top:161.6px;width:41.0px;height:8.5px;background:#b2300f"></div><div class="n" style="left:173.2px;top:161.6px;width:42.0px;height:8.5px;background:#b2300f"></div><div class="n" style="left:22.0px;top:154.3px;width:2.2px;height:16.0px;background:#b2300f"></div><div class="rt" style="color:#fff7ea;">RHYTHM</div></div>
<div class="reg" style="left:487.0px;top:150.7px;width:386.0px;height:175.4px;background:#d03a16;border-color:#151515;"><div class="n" style="left:93.5px;top:22.3px;width:58.5px;height:5.8px;background:#b2300f"></div><div class="n" style="left:339.7px;top:42.3px;width:17.1px;height:4.7px;background:#b2300f"></div><div class="n" style="left:213.6px;top:48.1px;width:16.3px;height:4.6px;background:#b2300f"></div><div class="n" style="left:0.0px;top:54.6px;width:40.5px;height:5.7px;background:#b2300f"></div><div class="n" style="left:43.0px;top:54.6px;width:41.0px;height:5.7px;background:#b2300f"></div><div class="n" style="left:86.0px;top:54.6px;width:12.0px;height:5.7px;background:#b2300f"></div><div class="n" style="left:203.0px;top:54.6px;width:8.0px;height:5.7px;background:#b2300f"></div><div class="n" style="left:214.7px;top:54.6px;width:9.1px;height:5.7px;background:#b2300f"></div><div class="n" style="left:225.0px;top:54.6px;width:29.5px;height:5.7px;background:#b2300f"></div><div class="n" style="left:257.0px;top:54.6px;width:21.0px;height:5.7px;background:#b2300f"></div><div class="n" style="left:353.7px;top:54.6px;width:31.3px;height:5.7px;background:#b2300f"></div><div class="n" style="left:0.0px;top:74.7px;width:100.0px;height:5.3px;background:#b2300f"></div><div class="n" style="left:170.0px;top:80.3px;width:19.0px;height:4.6px;background:#b2300f"></div><div class="n" style="left:192.0px;top:80.3px;width:19.7px;height:4.6px;background:#b2300f"></div><div class="n" style="left:298.8px;top:80.3px;width:18.2px;height:4.6px;background:#b2300f"></div><div class="n" style="left:320.8px;top:80.3px;width:18.9px;height:4.6px;background:#b2300f"></div><div class="n" style="left:149.0px;top:87.9px;width:21.0px;height:5.4px;background:#b2300f"></div><div class="n" style="left:278.0px;top:87.9px;width:20.8px;height:5.4px;background:#b2300f"></div><div class="n" style="left:143.5px;top:94.3px;width:9.5px;height:5.0px;background:#b2300f"></div><div class="n" style="left:181.0px;top:94.3px;width:12.5px;height:5.0px;background:#b2300f"></div><div class="n" style="left:310.0px;top:94.3px;width:12.0px;height:5.0px;background:#b2300f"></div><div class="n" style="left:238.0px;top:106.3px;width:47.0px;height:5.0px;background:#b2300f"></div><div class="n" style="left:213.6px;top:114.1px;width:15.4px;height:4.9px;background:#b2300f"></div><div class="n" style="left:96.0px;top:120.1px;width:46.0px;height:5.2px;background:#b2300f"></div><div class="n" style="left:0.0px;top:132.3px;width:40.5px;height:5.0px;background:#b2300f"></div><div class="n" style="left:43.0px;top:132.3px;width:41.0px;height:5.0px;background:#b2300f"></div><div class="n" style="left:86.0px;top:132.3px;width:12.0px;height:5.0px;background:#b2300f"></div><div class="n" style="left:203.0px;top:132.3px;width:8.0px;height:5.0px;background:#b2300f"></div><div class="n" style="left:214.7px;top:132.3px;width:9.1px;height:5.0px;background:#b2300f"></div><div class="n" style="left:225.0px;top:132.3px;width:29.5px;height:5.0px;background:#b2300f"></div><div class="n" style="left:257.0px;top:132.3px;width:21.0px;height:5.0px;background:#b2300f"></div><div class="n" style="left:280.0px;top:132.3px;width:8.0px;height:5.0px;background:#b2300f"></div><div class="n" style="left:353.7px;top:132.3px;width:31.3px;height:5.0px;background:#b2300f"></div><div class="n" style="left:96.0px;top:139.8px;width:46.0px;height:4.9px;background:#b2300f"></div><div class="n" style="left:280.0px;top:139.8px;width:19.0px;height:4.9px;background:#b2300f"></div><div class="n" style="left:0.0px;top:146.3px;width:40.5px;height:5.0px;background:#b2300f"></div><div class="n" style="left:43.0px;top:146.3px;width:41.0px;height:5.0px;background:#b2300f"></div><div class="n" style="left:86.0px;top:146.3px;width:12.0px;height:5.0px;background:#b2300f"></div><div class="n" style="left:203.0px;top:146.3px;width:8.0px;height:5.0px;background:#b2300f"></div><div class="n" style="left:214.7px;top:146.3px;width:9.1px;height:5.0px;background:#b2300f"></div><div class="n" style="left:225.0px;top:146.3px;width:29.5px;height:5.0px;background:#b2300f"></div><div class="n" style="left:257.0px;top:146.3px;width:21.0px;height:5.0px;background:#b2300f"></div><div class="n" style="left:280.0px;top:146.3px;width:8.0px;height:5.0px;background:#b2300f"></div><div class="n" style="left:353.7px;top:146.3px;width:31.3px;height:5.0px;background:#b2300f"></div><div class="n" style="left:0.0px;top:151.9px;width:40.0px;height:5.4px;background:#b2300f"></div><div class="n" style="left:225.0px;top:151.9px;width:29.5px;height:5.4px;background:#b2300f"></div><div class="n" style="left:257.0px;top:151.9px;width:21.0px;height:5.4px;background:#b2300f"></div><div class="n" style="left:300.7px;top:151.9px;width:8.3px;height:5.4px;background:#b2300f"></div><div class="n" style="left:150.0px;top:158.8px;width:63.6px;height:4.9px;background:#b2300f"></div><div class="n" style="left:225.0px;top:165.3px;width:20.0px;height:5.6px;background:#b2300f"></div><div class="rt" style="color:#fff7ea;">RHYTHM</div></div>
<div class="reg" style="left:873.0px;top:150.7px;width:43.0px;height:175.4px;background:#d03a16;border-color:#151515;"><div class="n" style="left:-1.0px;top:22.3px;width:43.0px;height:7.7px;background:#b2300f"></div><div class="n" style="left:-1.0px;top:134.1px;width:43.0px;height:9.2px;background:#b2300f"></div><div class="n" style="left:-1.0px;top:153.1px;width:43.0px;height:7.2px;background:#b2300f"></div><div class="n" style="left:-1.0px;top:162.3px;width:43.0px;height:8.0px;background:#b2300f"></div><div class="rt" style="color:#fff7ea;">RHY</div></div>
<div class="reg" style="left:916.0px;top:150.7px;width:42.5px;height:175.4px;background:#d03a16;border-color:#151515;"><div class="n" style="left:-1.0px;top:22.3px;width:43.0px;height:7.7px;background:#b2300f"></div><div class="n" style="left:-1.0px;top:141.7px;width:43.0px;height:8.6px;background:#b2300f"></div><div class="n" style="left:-1.0px;top:162.3px;width:43.0px;height:8.0px;background:#b2300f"></div><div class="rt" style="color:#fff7ea;">RHY</div></div>
<div class="reg" style="left:958.5px;top:150.7px;width:371.5px;height:175.4px;background:#d03a16;border-color:#151515;"><div class="n" style="left:7.8px;top:22.8px;width:131.7px;height:5.8px;background:#b2300f"></div><div class="n" style="left:0.1px;top:45.9px;width:41.4px;height:6.4px;background:#b2300f"></div><div class="n" style="left:43.5px;top:45.9px;width:41.0px;height:6.4px;background:#b2300f"></div><div class="n" style="left:87.0px;top:45.9px;width:39.5px;height:6.4px;background:#b2300f"></div><div class="n" style="left:128.5px;top:45.9px;width:42.0px;height:6.4px;background:#b2300f"></div><div class="n" style="left:172.5px;top:45.9px;width:40.6px;height:6.4px;background:#b2300f"></div><div class="n" style="left:215.1px;top:45.9px;width:41.2px;height:6.4px;background:#b2300f"></div><div class="n" style="left:258.3px;top:45.9px;width:8.6px;height:6.4px;background:#b2300f"></div><div class="n" style="left:269.2px;top:45.9px;width:40.0px;height:6.4px;background:#b2300f"></div><div class="n" style="left:311.5px;top:45.9px;width:41.0px;height:6.4px;background:#b2300f"></div><div class="n" style="left:354.5px;top:45.9px;width:16.0px;height:6.4px;background:#b2300f"></div><div class="n" style="left:250.5px;top:85.6px;width:23.0px;height:6.3px;background:#b2300f"></div><div class="n" style="left:351.5px;top:85.6px;width:19.0px;height:6.3px;background:#b2300f"></div><div class="n" style="left:266.5px;top:102.0px;width:104.0px;height:6.6px;background:#b2300f"></div><div class="n" style="left:138.5px;top:132.3px;width:137.0px;height:6.5px;background:#b2300f"></div><div class="n" style="left:0.1px;top:142.3px;width:41.4px;height:5.8px;background:#b2300f"></div><div class="n" style="left:43.5px;top:142.3px;width:41.0px;height:5.8px;background:#b2300f"></div><div class="n" style="left:87.0px;top:142.3px;width:39.5px;height:5.8px;background:#b2300f"></div><div class="n" style="left:128.5px;top:142.3px;width:42.0px;height:5.8px;background:#b2300f"></div><div class="n" style="left:172.5px;top:142.3px;width:40.6px;height:5.8px;background:#b2300f"></div><div class="n" style="left:215.1px;top:142.3px;width:41.2px;height:5.8px;background:#b2300f"></div><div class="n" style="left:258.3px;top:142.3px;width:8.6px;height:5.8px;background:#b2300f"></div><div class="n" style="left:269.2px;top:142.3px;width:40.0px;height:5.8px;background:#b2300f"></div><div class="n" style="left:311.5px;top:142.3px;width:41.0px;height:5.8px;background:#b2300f"></div><div class="n" style="left:354.5px;top:142.3px;width:16.0px;height:5.8px;background:#b2300f"></div><div class="n" style="left:0.1px;top:156.7px;width:41.4px;height:5.6px;background:#b2300f"></div><div class="n" style="left:43.5px;top:156.7px;width:41.0px;height:5.6px;background:#b2300f"></div><div class="n" style="left:87.0px;top:156.7px;width:39.5px;height:5.6px;background:#b2300f"></div><div class="n" style="left:128.5px;top:156.7px;width:42.0px;height:5.6px;background:#b2300f"></div><div class="n" style="left:172.5px;top:156.7px;width:40.6px;height:5.6px;background:#b2300f"></div><div class="n" style="left:215.1px;top:156.7px;width:41.2px;height:5.6px;background:#b2300f"></div><div class="n" style="left:258.3px;top:156.7px;width:8.6px;height:5.6px;background:#b2300f"></div><div class="n" style="left:269.2px;top:156.7px;width:40.0px;height:5.6px;background:#b2300f"></div><div class="n" style="left:311.5px;top:156.7px;width:41.0px;height:5.6px;background:#b2300f"></div><div class="n" style="left:354.5px;top:156.7px;width:16.0px;height:5.6px;background:#b2300f"></div><div class="n" style="left:0.1px;top:163.9px;width:41.4px;height:6.4px;background:#b2300f"></div><div class="n" style="left:128.5px;top:163.9px;width:84.6px;height:6.4px;background:#b2300f"></div><div class="n" style="left:354.5px;top:163.9px;width:16.0px;height:6.4px;background:#b2300f"></div><div class="rt" style="color:#fff7ea;">RHYTHM</div></div>
<div class="reg" style="left:172.5px;top:327.9px;width:32.5px;height:175.4px;background:#d07c0b;border-color:#151515;"><div class="n" style="left:9.5px;top:73.1px;width:22.0px;height:11.0px;background:#a8671c"></div><div class="n" style="left:-1.5px;top:110.1px;width:23.0px;height:11.6px;background:#a8671c"></div><div class="rt" style="color:#fff7ea;">PA</div></div>
<div class="reg" style="left:249.0px;top:327.9px;width:29.5px;height:175.4px;background:#d07c0b;border-color:#151515;"><div class="n" style="left:9.0px;top:73.1px;width:20.0px;height:11.0px;background:#a8671c"></div><div class="n" style="left:-1.0px;top:110.1px;width:21.0px;height:11.6px;background:#a8671c"></div><div class="rt" style="color:#fff7ea;">PA</div></div>
<div class="reg" style="left:292.5px;top:327.9px;width:97.5px;height:175.4px;background:#d07c0b;border-color:#151515;"><div class="n" style="left:-1.0px;top:73.1px;width:97.5px;height:11.0px;background:#a8671c"></div><div class="n" style="left:-1.0px;top:110.1px;width:97.5px;height:11.6px;background:#a8671c"></div><div class="rt" style="color:#fff7ea;">PAD</div></div>
<div class="reg" style="left:390.5px;top:327.9px;width:96.5px;height:175.4px;background:#d07c0b;border-color:#151515;"><div class="n" style="left:-1.0px;top:73.1px;width:96.5px;height:11.0px;background:#a8671c"></div><div class="n" style="left:-1.0px;top:110.1px;width:96.5px;height:11.6px;background:#a8671c"></div><div class="rt" style="color:#fff7ea;">PAD</div></div>
<div class="reg" style="left:487.5px;top:327.9px;width:103.5px;height:175.4px;background:#d07c0b;border-color:#151515;"><div class="n" style="left:-1.0px;top:73.1px;width:103.5px;height:11.0px;background:#a8671c"></div><div class="n" style="left:-1.0px;top:110.1px;width:103.5px;height:11.6px;background:#a8671c"></div><div class="rt" style="color:#fff7ea;">PAD</div></div>
<div class="reg" style="left:288.0px;top:505.1px;width:423.8px;height:175.4px;background:#0bcccc;border-color:#151515;"><div class="n" style="left:-0.2px;top:79.2px;width:19.2px;height:11.3px;background:#16a3ad"></div><div class="n" style="left:27.0px;top:79.2px;width:83.0px;height:11.3px;background:#16a3ad"></div><div class="n" style="left:122.6px;top:79.2px;width:81.4px;height:11.3px;background:#16a3ad"></div><div class="n" style="left:219.0px;top:79.2px;width:78.0px;height:11.3px;background:#16a3ad"></div><div class="n" style="left:5.0px;top:92.2px;width:20.0px;height:10.7px;background:#16a3ad"></div><div class="n" style="left:101.0px;top:92.2px;width:21.0px;height:10.7px;background:#16a3ad"></div><div class="n" style="left:198.0px;top:92.2px;width:21.0px;height:10.7px;background:#16a3ad"></div><div class="n" style="left:368.4px;top:92.2px;width:5.6px;height:10.7px;background:#16a3ad"></div><div class="n" style="left:295.0px;top:103.9px;width:129.0px;height:11.0px;background:#16a3ad"></div><div class="rt" style="color:#f4ffff;font-size:14px;letter-spacing:0;-webkit-text-stroke:0.65px currentColor;top:2.5px;">BASS</div></div>
<div class="reg hd" style="left:711.7px;top:505.1px;width:128.3px;height:175.4px;background:#0bcccc;border-color:#151515;"><div class="n" style="left:0;top:0;right:0;height:21.5px;background:#bdf4f5"></div><div class="n" style="left:0.3px;top:98.2px;width:127.0px;height:10.7px;background:#16a3ad"></div><div class="n" style="left:72.8px;top:83.9px;width:6.1px;height:14.3px;background:#16a3ad"></div><div class="n" style="left:0;top:0;right:0;bottom:0;border:1.5px solid #bdf4f5;border-radius:4px"></div><div class="rt" style="color:#17585c;">BASS</div></div>
<div class="reg hd" style="left:841.0px;top:505.1px;width:128.0px;height:175.4px;background:#2387a7;border-color:#151515;"><div class="n" style="left:0;top:0;right:0;height:21.5px;background:#c0edf8"></div><svg class="n" style="left:0;top:0" width="128" height="176"><path d="M0.0 77.0 L2.0 77.5 L4.0 78.3 L6.0 76.2 L8.0 77.1 L10.0 79.6 L12.0 79.0 L14.0 78.4 L16.0 78.4 L18.0 78.0 L20.0 78.5 L22.0 78.8 L24.0 77.2 L26.0 79.1 L28.0 78.6 L30.0 78.6 L32.0 77.5 L34.0 77.7 L36.0 79.2 L38.0 76.7 L40.0 79.5 L42.0 78.3 L44.0 77.9 L46.0 77.4 L48.0 78.2 L50.0 78.5 L52.0 79.1 L54.0 78.5 L56.0 79.1 L58.0 79.3 L60.0 78.6 L62.0 79.0 L64.0 77.2 L66.0 79.1 L68.0 76.5 L70.0 77.6 L72.0 77.2 L74.0 79.2 L76.0 78.3 L78.0 78.6 L80.0 79.2 L82.0 77.9 L84.0 77.3 L86.0 78.2 L88.0 76.9 L90.0 78.3 L92.0 76.3 L94.0 77.3 L96.0 79.2 L98.0 77.8 L100.0 78.4 L102.0 78.1 L104.0 79.4 L106.0 77.7 L108.0 77.0 L110.0 79.5 L112.0 78.1 L114.0 77.6 L116.0 76.3 L118.0 78.3 L120.0 78.3 L122.0 78.5 L124.0 78.6 L126.0 76.3 L128.0 78.5 L130.0 77.1 L130.0 110.6 L128.0 112.3 L126.0 109.2 L124.0 111.5 L122.0 110.2 L120.0 110.6 L118.0 109.2 L116.0 111.1 L114.0 111.0 L112.0 109.0 L110.0 110.8 L108.0 110.0 L106.0 111.4 L104.0 110.7 L102.0 111.1 L100.0 111.0 L98.0 110.8 L96.0 110.3 L94.0 112.3 L92.0 112.0 L90.0 109.5 L88.0 110.4 L86.0 109.1 L84.0 109.3 L82.0 112.4 L80.0 112.3 L78.0 110.1 L76.0 109.2 L74.0 109.2 L72.0 111.6 L70.0 109.5 L68.0 111.7 L66.0 112.4 L64.0 109.2 L62.0 111.0 L60.0 109.7 L58.0 110.9 L56.0 112.3 L54.0 109.6 L52.0 112.4 L50.0 112.2 L48.0 112.1 L46.0 111.0 L44.0 110.3 L42.0 110.0 L40.0 110.5 L38.0 109.7 L36.0 109.3 L34.0 112.2 L32.0 111.7 L30.0 112.1 L28.0 112.0 L26.0 110.6 L24.0 109.1 L22.0 111.0 L20.0 109.2 L18.0 111.5 L16.0 112.0 L14.0 109.5 L12.0 110.6 L10.0 110.6 L8.0 109.8 L6.0 111.8 L4.0 109.2 L2.0 111.1 L0.0 110.9 Z" fill="#bdeefa"/><rect x="3.0" y="77.4" width="1.2" height="8" fill="#2387a7"/><rect x="2.6" y="103.2" width="1.2" height="8" fill="#2387a7"/><rect x="7.1" y="77.4" width="1.2" height="6" fill="#2387a7"/><rect x="7.8" y="106.2" width="1.2" height="5" fill="#2387a7"/><rect x="10.9" y="77.4" width="1.2" height="13" fill="#2387a7"/><rect x="10.1" y="105.2" width="1.2" height="6" fill="#2387a7"/><rect x="16.3" y="77.4" width="1.2" height="8" fill="#2387a7"/><rect x="15.9" y="107.2" width="1.2" height="4" fill="#2387a7"/><rect x="20.0" y="77.4" width="1.2" height="13" fill="#2387a7"/><rect x="19.5" y="106.2" width="1.2" height="5" fill="#2387a7"/><rect x="23.6" y="77.4" width="1.2" height="7" fill="#2387a7"/><rect x="22.8" y="108.2" width="1.2" height="3" fill="#2387a7"/><rect x="27.5" y="77.4" width="1.2" height="6" fill="#2387a7"/><rect x="27.4" y="107.2" width="1.2" height="4" fill="#2387a7"/><rect x="33.1" y="77.4" width="1.2" height="5" fill="#2387a7"/><rect x="32.8" y="108.2" width="1.2" height="3" fill="#2387a7"/><rect x="38.0" y="77.4" width="1.2" height="8" fill="#2387a7"/><rect x="37.6" y="105.2" width="1.2" height="6" fill="#2387a7"/><rect x="43.4" y="77.4" width="1.2" height="4" fill="#2387a7"/><rect x="44.3" y="103.2" width="1.2" height="8" fill="#2387a7"/><rect x="47.3" y="77.4" width="1.2" height="13" fill="#2387a7"/><rect x="46.7" y="103.2" width="1.2" height="8" fill="#2387a7"/><rect x="51.2" y="77.4" width="1.2" height="13" fill="#2387a7"/><rect x="51.8" y="108.2" width="1.2" height="3" fill="#2387a7"/><rect x="55.2" y="77.4" width="1.2" height="5" fill="#2387a7"/><rect x="54.8" y="105.2" width="1.2" height="6" fill="#2387a7"/><rect x="60.6" y="77.4" width="1.2" height="6" fill="#2387a7"/><rect x="60.3" y="105.2" width="1.2" height="6" fill="#2387a7"/><rect x="64.8" y="77.4" width="1.2" height="7" fill="#2387a7"/><rect x="64.7" y="103.2" width="1.2" height="8" fill="#2387a7"/><rect x="70.6" y="77.4" width="1.2" height="5" fill="#2387a7"/><rect x="69.6" y="107.2" width="1.2" height="4" fill="#2387a7"/><rect x="76.4" y="77.4" width="1.2" height="8" fill="#2387a7"/><rect x="76.3" y="103.2" width="1.2" height="8" fill="#2387a7"/><rect x="82.3" y="77.4" width="1.2" height="9" fill="#2387a7"/><rect x="81.4" y="107.2" width="1.2" height="4" fill="#2387a7"/><rect x="86.7" y="77.4" width="1.2" height="13" fill="#2387a7"/><rect x="87.6" y="103.2" width="1.2" height="8" fill="#2387a7"/><rect x="91.3" y="77.4" width="1.2" height="5" fill="#2387a7"/><rect x="92.0" y="108.2" width="1.2" height="3" fill="#2387a7"/><rect x="97.2" y="77.4" width="1.2" height="4" fill="#2387a7"/><rect x="96.3" y="107.2" width="1.2" height="4" fill="#2387a7"/><rect x="102.9" y="77.4" width="1.2" height="9" fill="#2387a7"/><rect x="103.8" y="103.2" width="1.2" height="8" fill="#2387a7"/><rect x="108.6" y="77.4" width="1.2" height="7" fill="#2387a7"/><rect x="107.7" y="103.2" width="1.2" height="8" fill="#2387a7"/><rect x="113.0" y="77.4" width="1.2" height="4" fill="#2387a7"/><rect x="113.1" y="107.2" width="1.2" height="4" fill="#2387a7"/><rect x="116.8" y="77.4" width="1.2" height="4" fill="#2387a7"/><rect x="116.8" y="103.2" width="1.2" height="8" fill="#2387a7"/><rect x="119.9" y="77.4" width="1.2" height="8" fill="#2387a7"/><rect x="119.6" y="108.2" width="1.2" height="3" fill="#2387a7"/><rect x="123.7" y="77.4" width="1.2" height="13" fill="#2387a7"/><rect x="123.6" y="103.2" width="1.2" height="8" fill="#2387a7"/></svg><div class="n" style="left:0;top:0;right:0;bottom:0;border:1.5px solid #c0edf8;border-radius:4px"></div><div class="rt" style="color:#1d5866;">Sub Bass &nbsp;&nbsp;<span style="display:inline-block;width:11px;height:11px;border:1.5px solid #1d5866;border-radius:50%;vertical-align:-1px;-webkit-text-stroke:0"></span></div></div>
<div class="reg hd" style="left:970.0px;top:505.1px;width:127.5px;height:175.4px;background:#0bcccc;border-color:#151515;"><div class="n" style="left:0;top:0;right:0;height:21.5px;background:#bdf4f5"></div><div class="n" style="left:0.0px;top:98.2px;width:127.0px;height:10.7px;background:#16a3ad"></div><div class="n" style="left:4.0px;top:84.9px;width:6.0px;height:13.3px;background:#16a3ad"></div><div class="n" style="left:13.0px;top:84.9px;width:6.0px;height:13.3px;background:#16a3ad"></div><div class="n" style="left:0;top:0;right:0;bottom:0;border:1.5px solid #bdf4f5;border-radius:4px"></div><div class="rt" style="color:#17585c;">BASS</div></div>
<div class="reg hd" style="left:1098.5px;top:505.1px;width:127.5px;height:175.4px;background:#2387a7;border-color:#151515;"><div class="n" style="left:0;top:0;right:0;height:21.5px;background:#c0edf8"></div><svg class="n" style="left:0;top:0" width="128" height="176"><path d="M0.0 78.3 L2.0 78.9 L4.0 78.7 L6.0 76.3 L8.0 79.4 L10.0 79.3 L12.0 77.8 L14.0 78.0 L16.0 76.2 L18.0 77.2 L20.0 78.8 L22.0 78.9 L24.0 78.3 L26.0 76.2 L28.0 76.9 L30.0 79.5 L32.0 77.2 L34.0 78.0 L36.0 76.9 L38.0 78.5 L40.0 79.2 L42.0 77.4 L44.0 76.7 L46.0 77.2 L48.0 76.2 L50.0 77.3 L52.0 79.0 L54.0 77.3 L56.0 78.6 L58.0 79.5 L60.0 78.7 L62.0 76.3 L64.0 77.4 L66.0 76.2 L68.0 76.8 L70.0 76.9 L72.0 79.4 L74.0 77.4 L76.0 78.0 L78.0 76.6 L80.0 78.9 L82.0 76.3 L84.0 76.5 L86.0 78.3 L88.0 77.4 L90.0 78.1 L92.0 77.3 L94.0 76.5 L96.0 78.5 L98.0 76.7 L100.0 79.6 L102.0 77.6 L104.0 78.2 L106.0 77.7 L108.0 76.4 L110.0 76.3 L112.0 79.1 L114.0 78.7 L116.0 78.3 L118.0 76.6 L120.0 76.7 L122.0 77.2 L124.0 79.6 L126.0 79.5 L128.0 77.9 L128.0 111.5 L126.0 110.5 L124.0 111.9 L122.0 110.5 L120.0 111.9 L118.0 110.5 L116.0 111.7 L114.0 112.2 L112.0 109.4 L110.0 110.7 L108.0 112.1 L106.0 110.4 L104.0 111.8 L102.0 109.8 L100.0 110.8 L98.0 109.2 L96.0 112.4 L94.0 109.5 L92.0 109.6 L90.0 110.1 L88.0 112.1 L86.0 112.1 L84.0 110.2 L82.0 112.2 L80.0 111.9 L78.0 111.5 L76.0 111.6 L74.0 110.2 L72.0 112.2 L70.0 111.6 L68.0 112.2 L66.0 109.2 L64.0 111.0 L62.0 111.7 L60.0 111.9 L58.0 109.1 L56.0 109.2 L54.0 110.6 L52.0 110.6 L50.0 110.1 L48.0 111.3 L46.0 111.1 L44.0 109.2 L42.0 109.6 L40.0 110.0 L38.0 112.3 L36.0 112.2 L34.0 111.3 L32.0 112.3 L30.0 112.0 L28.0 109.7 L26.0 112.0 L24.0 109.4 L22.0 109.5 L20.0 109.5 L18.0 112.1 L16.0 109.7 L14.0 111.0 L12.0 109.8 L10.0 109.4 L8.0 111.2 L6.0 110.6 L4.0 112.1 L2.0 112.2 L0.0 111.5 Z" fill="#bdeefa"/><rect x="3.0" y="77.4" width="1.2" height="7" fill="#2387a7"/><rect x="2.6" y="106.2" width="1.2" height="5" fill="#2387a7"/><rect x="7.2" y="77.4" width="1.2" height="5" fill="#2387a7"/><rect x="7.0" y="108.2" width="1.2" height="3" fill="#2387a7"/><rect x="13.2" y="77.4" width="1.2" height="5" fill="#2387a7"/><rect x="13.9" y="105.2" width="1.2" height="6" fill="#2387a7"/><rect x="16.7" y="77.4" width="1.2" height="7" fill="#2387a7"/><rect x="16.7" y="106.2" width="1.2" height="5" fill="#2387a7"/><rect x="21.4" y="77.4" width="1.2" height="8" fill="#2387a7"/><rect x="20.5" y="106.2" width="1.2" height="5" fill="#2387a7"/><rect x="26.7" y="77.4" width="1.2" height="6" fill="#2387a7"/><rect x="27.1" y="103.2" width="1.2" height="8" fill="#2387a7"/><rect x="32.0" y="77.4" width="1.2" height="6" fill="#2387a7"/><rect x="32.4" y="103.2" width="1.2" height="8" fill="#2387a7"/><rect x="35.9" y="77.4" width="1.2" height="7" fill="#2387a7"/><rect x="36.4" y="106.2" width="1.2" height="5" fill="#2387a7"/><rect x="40.9" y="77.4" width="1.2" height="6" fill="#2387a7"/><rect x="41.2" y="106.2" width="1.2" height="5" fill="#2387a7"/><rect x="45.7" y="77.4" width="1.2" height="4" fill="#2387a7"/><rect x="45.8" y="105.2" width="1.2" height="6" fill="#2387a7"/><rect x="49.4" y="77.4" width="1.2" height="9" fill="#2387a7"/><rect x="49.4" y="106.2" width="1.2" height="5" fill="#2387a7"/><rect x="54.9" y="77.4" width="1.2" height="9" fill="#2387a7"/><rect x="54.6" y="106.2" width="1.2" height="5" fill="#2387a7"/><rect x="59.8" y="77.4" width="1.2" height="9" fill="#2387a7"/><rect x="59.5" y="105.2" width="1.2" height="6" fill="#2387a7"/><rect x="65.3" y="77.4" width="1.2" height="13" fill="#2387a7"/><rect x="66.3" y="105.2" width="1.2" height="6" fill="#2387a7"/><rect x="71.2" y="77.4" width="1.2" height="8" fill="#2387a7"/><rect x="71.3" y="107.2" width="1.2" height="4" fill="#2387a7"/><rect x="74.7" y="77.4" width="1.2" height="13" fill="#2387a7"/><rect x="75.6" y="106.2" width="1.2" height="5" fill="#2387a7"/><rect x="79.1" y="77.4" width="1.2" height="9" fill="#2387a7"/><rect x="79.6" y="108.2" width="1.2" height="3" fill="#2387a7"/><rect x="84.3" y="77.4" width="1.2" height="5" fill="#2387a7"/><rect x="84.9" y="103.2" width="1.2" height="8" fill="#2387a7"/><rect x="89.1" y="77.4" width="1.2" height="9" fill="#2387a7"/><rect x="88.7" y="105.2" width="1.2" height="6" fill="#2387a7"/><rect x="93.7" y="77.4" width="1.2" height="13" fill="#2387a7"/><rect x="94.2" y="106.2" width="1.2" height="5" fill="#2387a7"/><rect x="96.8" y="77.4" width="1.2" height="5" fill="#2387a7"/><rect x="96.7" y="103.2" width="1.2" height="8" fill="#2387a7"/><rect x="101.8" y="77.4" width="1.2" height="5" fill="#2387a7"/><rect x="102.0" y="107.2" width="1.2" height="4" fill="#2387a7"/><rect x="104.9" y="77.4" width="1.2" height="7" fill="#2387a7"/><rect x="104.2" y="107.2" width="1.2" height="4" fill="#2387a7"/><rect x="110.6" y="77.4" width="1.2" height="4" fill="#2387a7"/><rect x="111.5" y="106.2" width="1.2" height="5" fill="#2387a7"/><rect x="115.0" y="77.4" width="1.2" height="8" fill="#2387a7"/><rect x="114.9" y="108.2" width="1.2" height="3" fill="#2387a7"/><rect x="119.1" y="77.4" width="1.2" height="9" fill="#2387a7"/><rect x="118.2" y="103.2" width="1.2" height="8" fill="#2387a7"/><rect x="122.7" y="77.4" width="1.2" height="9" fill="#2387a7"/><rect x="121.7" y="106.2" width="1.2" height="5" fill="#2387a7"/><rect x="126.9" y="77.4" width="1.2" height="6" fill="#2387a7"/><rect x="127.6" y="105.2" width="1.2" height="6" fill="#2387a7"/></svg><div class="n" style="left:0;top:0;right:0;bottom:0;border:1.5px solid #c0edf8;border-radius:4px"></div><div class="rt" style="color:#1d5866;">Sub Bass &nbsp;&nbsp;<span style="display:inline-block;width:11px;height:11px;border:1.5px solid #1d5866;border-radius:50%;vertical-align:-1px;-webkit-text-stroke:0"></span></div></div>
<div class="reg hd" style="left:1227.5px;top:505.1px;width:112.5px;height:175.4px;background:#2387a7;border-color:#151515;"><div class="n" style="left:0;top:0;right:0;height:21.5px;background:#c0edf8"></div><svg class="n" style="left:0;top:0" width="112" height="176"><path d="M0.0 80.8 L2.0 81.9 L4.0 81.5 L6.0 79.9 L8.0 79.8 L10.0 79.9 L12.0 81.1 L14.0 80.1 L16.0 81.8 L18.0 81.7 L20.0 83.0 L22.0 82.6 L24.0 80.2 L26.0 80.7 L28.0 80.3 L30.0 81.9 L32.0 81.6 L34.0 79.9 L36.0 82.0 L38.0 80.8 L40.0 81.2 L42.0 82.4 L44.0 80.5 L46.0 81.5 L48.0 82.2 L50.0 83.0 L52.0 81.1 L54.0 80.2 L56.0 79.8 L58.0 82.3 L60.0 82.7 L62.0 82.1 L64.0 81.7 L66.0 82.6 L68.0 81.3 L70.0 79.9 L72.0 81.9 L74.0 82.5 L76.0 81.0 L78.0 79.8 L80.0 80.3 L82.0 79.9 L84.0 80.1 L86.0 81.0 L88.0 80.0 L90.0 81.6 L92.0 82.5 L94.0 80.6 L96.0 80.9 L98.0 83.0 L100.0 80.3 L102.0 80.5 L104.0 81.7 L106.0 79.7 L108.0 81.0 L110.0 82.9 L112.0 81.5 L114.0 82.0 L114.0 109.2 L112.0 111.1 L110.0 111.3 L108.0 110.9 L106.0 110.4 L104.0 109.9 L102.0 110.6 L100.0 109.8 L98.0 109.5 L96.0 112.0 L94.0 110.4 L92.0 111.9 L90.0 112.0 L88.0 110.5 L86.0 112.0 L84.0 109.8 L82.0 111.6 L80.0 109.4 L78.0 110.6 L76.0 111.3 L74.0 110.0 L72.0 112.4 L70.0 111.4 L68.0 111.3 L66.0 112.2 L64.0 110.6 L62.0 111.0 L60.0 110.1 L58.0 110.9 L56.0 111.3 L54.0 110.7 L52.0 111.6 L50.0 109.4 L48.0 110.0 L46.0 112.0 L44.0 111.0 L42.0 111.4 L40.0 110.0 L38.0 111.0 L36.0 110.5 L34.0 109.7 L32.0 109.2 L30.0 110.3 L28.0 111.0 L26.0 111.8 L24.0 109.4 L22.0 110.0 L20.0 109.2 L18.0 110.3 L16.0 112.2 L14.0 109.8 L12.0 111.8 L10.0 109.3 L8.0 110.5 L6.0 110.7 L4.0 110.2 L2.0 109.2 L0.0 109.5 Z" fill="#bdeefa"/><rect x="3.0" y="80.9" width="1.2" height="13" fill="#2387a7"/><rect x="2.8" y="103.2" width="1.2" height="8" fill="#2387a7"/><rect x="7.2" y="80.9" width="1.2" height="4" fill="#2387a7"/><rect x="7.5" y="105.2" width="1.2" height="6" fill="#2387a7"/><rect x="10.4" y="80.9" width="1.2" height="4" fill="#2387a7"/><rect x="10.3" y="107.2" width="1.2" height="4" fill="#2387a7"/><rect x="13.7" y="80.9" width="1.2" height="8" fill="#2387a7"/><rect x="12.9" y="108.2" width="1.2" height="3" fill="#2387a7"/><rect x="18.4" y="80.9" width="1.2" height="8" fill="#2387a7"/><rect x="19.3" y="108.2" width="1.2" height="3" fill="#2387a7"/><rect x="23.3" y="80.9" width="1.2" height="4" fill="#2387a7"/><rect x="23.5" y="107.2" width="1.2" height="4" fill="#2387a7"/><rect x="26.7" y="80.9" width="1.2" height="6" fill="#2387a7"/><rect x="26.9" y="106.2" width="1.2" height="5" fill="#2387a7"/><rect x="31.1" y="80.9" width="1.2" height="4" fill="#2387a7"/><rect x="32.1" y="105.2" width="1.2" height="6" fill="#2387a7"/><rect x="35.5" y="80.9" width="1.2" height="7" fill="#2387a7"/><rect x="34.7" y="106.2" width="1.2" height="5" fill="#2387a7"/><rect x="38.8" y="80.9" width="1.2" height="6" fill="#2387a7"/><rect x="38.8" y="106.2" width="1.2" height="5" fill="#2387a7"/><rect x="43.9" y="80.9" width="1.2" height="8" fill="#2387a7"/><rect x="43.3" y="108.2" width="1.2" height="3" fill="#2387a7"/><rect x="49.8" y="80.9" width="1.2" height="6" fill="#2387a7"/><rect x="50.1" y="107.2" width="1.2" height="4" fill="#2387a7"/><rect x="55.5" y="80.9" width="1.2" height="13" fill="#2387a7"/><rect x="55.1" y="103.2" width="1.2" height="8" fill="#2387a7"/><rect x="60.4" y="80.9" width="1.2" height="4" fill="#2387a7"/><rect x="60.5" y="106.2" width="1.2" height="5" fill="#2387a7"/><rect x="66.2" y="80.9" width="1.2" height="6" fill="#2387a7"/><rect x="66.2" y="107.2" width="1.2" height="4" fill="#2387a7"/><rect x="71.5" y="80.9" width="1.2" height="6" fill="#2387a7"/><rect x="71.7" y="107.2" width="1.2" height="4" fill="#2387a7"/><rect x="76.9" y="80.9" width="1.2" height="13" fill="#2387a7"/><rect x="77.5" y="107.2" width="1.2" height="4" fill="#2387a7"/><rect x="82.3" y="80.9" width="1.2" height="9" fill="#2387a7"/><rect x="81.7" y="107.2" width="1.2" height="4" fill="#2387a7"/><rect x="86.8" y="80.9" width="1.2" height="9" fill="#2387a7"/><rect x="87.8" y="108.2" width="1.2" height="3" fill="#2387a7"/><rect x="92.2" y="80.9" width="1.2" height="7" fill="#2387a7"/><rect x="91.5" y="106.2" width="1.2" height="5" fill="#2387a7"/><rect x="97.0" y="80.9" width="1.2" height="6" fill="#2387a7"/><rect x="97.6" y="105.2" width="1.2" height="6" fill="#2387a7"/><rect x="102.1" y="80.9" width="1.2" height="6" fill="#2387a7"/><rect x="101.3" y="106.2" width="1.2" height="5" fill="#2387a7"/><rect x="105.5" y="80.9" width="1.2" height="7" fill="#2387a7"/><rect x="105.1" y="107.2" width="1.2" height="4" fill="#2387a7"/><rect x="109.9" y="80.9" width="1.2" height="8" fill="#2387a7"/><rect x="109.9" y="108.2" width="1.2" height="3" fill="#2387a7"/></svg><div class="n" style="left:0;top:0;right:0;bottom:0;border:1.5px solid #c0edf8;border-radius:4px"></div><div class="rt" style="color:#1d5866;">Sub Bass &nbsp;&nbsp;<span style="display:inline-block;width:11px;height:11px;border:1.5px solid #1d5866;border-radius:50%;vertical-align:-1px;-webkit-text-stroke:0"></span></div></div>
<div class="reg" style="left:130.5px;top:682.3px;width:78.0px;height:175.4px;background:#cdc600;border-color:#151515;"><div class="n" style="left:24.5px;top:86.1px;width:10.8px;height:10.6px;background:#a9a300"></div><div class="n" style="left:-0.5px;top:98.5px;width:78.0px;height:10.9px;background:#a9a300"></div><div class="rt" style="color:#fbfbe8;font-size:14px;letter-spacing:0;-webkit-text-stroke:0.65px currentColor;top:2.5px;">FX</div></div>
<div class="reg hd" style="left:282.5px;top:682.3px;width:10.5px;height:175.4px;background:#cdc600;border-color:#151515;border-radius:2px;"><div class="n" style="left:0;top:0;right:0;height:23px;background:#f6f2a2"></div><svg class="n" style="left:0;top:0" width="10" height="176"><path d="M2 77.70000000000005 L3.5 91.70000000000005 L6.5 95.70000000000005 L7 97.70000000000005 L6.5 100.70000000000005 L3.5 105.70000000000005 L2.5 113.70000000000005 L1.5 101.70000000000005 Z" fill="#f3eeb0"/><rect x="1" y="59.700000000000045" width="1" height="70" fill="#f3eeb0" opacity="0.6"/></svg><div class="n" style="left:0;top:0;right:0;bottom:0;border:1.5px solid #f6f2a2;border-radius:1px"></div></div>
<div class="reg hd" style="left:705.5px;top:682.3px;width:11.5px;height:175.4px;background:#cdc600;border-color:#151515;border-radius:2px;"><div class="n" style="left:0;top:0;right:0;height:23px;background:#f6f2a2"></div><svg class="n" style="left:0;top:0" width="12" height="176"><path d="M2 77.70000000000005 L3.5 91.70000000000005 L6.5 95.70000000000005 L7 97.70000000000005 L6.5 100.70000000000005 L3.5 105.70000000000005 L2.5 113.70000000000005 L1.5 101.70000000000005 Z" fill="#f3eeb0"/><rect x="1" y="59.700000000000045" width="1" height="70" fill="#f3eeb0" opacity="0.6"/></svg><div class="n" style="left:0;top:0;right:0;bottom:0;border:1.5px solid #f6f2a2;border-radius:1px"></div></div>
<div class="reg hd" style="left:829.5px;top:682.3px;width:20.0px;height:175.4px;background:#cdc600;border-color:#151515;"><div class="n" style="left:0;top:0;right:0;height:23px;background:#f6f2a2"></div><svg class="n" style="left:0;top:0" width="20" height="176"><path d="M1.5 83.70000000000005 L5 82.70000000000005 L8 86.70000000000005 L11 91.70000000000005 L14 95.70000000000005 L17 97.10000000000005 L17 98.30000000000004 L14 99.70000000000005 L11 103.70000000000005 L8 108.70000000000005 L5 112.70000000000005 L1.5 111.70000000000005 Z" fill="#f3eeb0"/><rect x="10" y="96.70000000000005" width="20.0" height="2" fill="#ebe59a"/></svg><div class="n" style="left:0;top:0;right:0;bottom:0;border:1.5px solid #f6f2a2;border-radius:4px"></div><div class="rt" style="color:#4a4820;">T</div></div>
<div class="reg hd" style="left:905.5px;top:682.3px;width:64.0px;height:175.4px;background:#cdc600;border-color:#151515;"><div class="n" style="left:0;top:0;right:0;height:23px;background:#f6f2a2"></div><svg class="n" style="left:0;top:0" width="64" height="176"><path d="M2 87.70000000000005 L6 85.70000000000005 L10 89.70000000000005 L12 96.70000000000005 L12 98.70000000000005 L10 105.70000000000005 L6 110.70000000000005 L2 107.70000000000005 Z" fill="#f3eeb0"/><rect x="3" y="71.70000000000005" width="1.3" height="44" fill="#f3eeb0"/><rect x="8" y="70.70000000000005" width="1.3" height="46" fill="#f3eeb0"/><rect x="5.5" y="77.70000000000005" width="1" height="34" fill="#f3eeb0"/><rect x="10" y="96.70000000000005" width="64.0" height="2" fill="#ebe59a"/></svg><div class="n" style="left:0;top:0;right:0;bottom:0;border:1.5px solid #f6f2a2;border-radius:4px"></div><div class="rt" style="color:#4a4820;">Weird S</div></div>
<div class="reg hd" style="left:864.5px;top:859.5px;width:9.5px;height:175.4px;background:#22c22a;border-color:#151515;border-radius:2px;"><div class="n" style="left:0;top:0;right:0;height:23px;background:#bff5c0"></div><svg class="n" style="left:0;top:0" width="10" height="175"><path d="M1.5 77.5 L4 89.5 L7 93.5 L8 95.5 L7 98.5 L4 103.5 L1.5 115.5 Z" fill="#c7f7c8"/></svg><div class="n" style="left:0;top:0;right:0;bottom:0;border:1.5px solid #bff5c0;border-radius:1px"></div></div>
<div class="reg hd" style="left:874.5px;top:859.5px;width:12.0px;height:175.4px;background:#22c22a;border-color:#151515;border-radius:2px;"><div class="n" style="left:0;top:0;right:0;height:23px;background:#bff5c0"></div><svg class="n" style="left:0;top:0" width="12" height="175"><path d="M1.5 77.5 L4 89.5 L7 93.5 L8 95.5 L7 98.5 L4 103.5 L1.5 115.5 Z" fill="#c7f7c8"/></svg><div class="n" style="left:0;top:0;right:0;bottom:0;border:1.5px solid #bff5c0;border-radius:1px"></div></div>
<div class="reg hd" style="left:890.5px;top:859.5px;width:8.5px;height:175.4px;background:#22c22a;border-color:#151515;border-radius:2px;"><div class="n" style="left:0;top:0;right:0;height:23px;background:#bff5c0"></div><svg class="n" style="left:0;top:0" width="8" height="175"><path d="M1.5 77.5 L4 89.5 L7 93.5 L8 95.5 L7 98.5 L4 103.5 L1.5 115.5 Z" fill="#c7f7c8"/></svg><div class="n" style="left:0;top:0;right:0;bottom:0;border:1.5px solid #bff5c0;border-radius:1px"></div></div>
<div class="reg hd" style="left:899.5px;top:859.5px;width:7.0px;height:175.4px;background:#22c22a;border-color:#151515;border-radius:2px;"><div class="n" style="left:0;top:0;right:0;height:23px;background:#bff5c0"></div><svg class="n" style="left:0;top:0" width="7" height="175"><path d="M1.5 77.5 L4 89.5 L7 93.5 L8 95.5 L7 98.5 L4 103.5 L1.5 115.5 Z" fill="#c7f7c8"/></svg><div class="n" style="left:0;top:0;right:0;bottom:0;border:1.5px solid #bff5c0;border-radius:1px"></div></div>
<div class="reg hd" style="left:906.5px;top:859.5px;width:14.0px;height:175.4px;background:#22c22a;border-color:#151515;border-radius:2px;"><div class="n" style="left:0;top:0;right:0;height:23px;background:#bff5c0"></div><div class="n" style="left:0.5px;top:85.9px;width:6.0px;height:10.3px;background:#1da424"></div><div class="n" style="left:3.5px;top:98.5px;width:9.5px;height:10.7px;background:#1da424"></div><svg class="n" style="left:0;top:0" width="14" height="175"><path d="M1.5 77.5 L4 89.5 L7 93.5 L8 95.5 L7 98.5 L4 103.5 L1.5 115.5 Z" fill="#c7f7c8"/></svg><div class="n" style="left:0;top:0;right:0;bottom:0;border:1.5px solid #bff5c0;border-radius:1px"></div></div>
<div class="reg hd" style="left:921.5px;top:859.5px;width:10.5px;height:175.4px;background:#22c22a;border-color:#151515;border-radius:2px;"><div class="n" style="left:0;top:0;right:0;height:23px;background:#bff5c0"></div><div class="n" style="left:-1.0px;top:98.5px;width:6.5px;height:10.7px;background:#1da424"></div><svg class="n" style="left:0;top:0" width="10" height="175"><path d="M1.5 77.5 L4 89.5 L7 93.5 L8 95.5 L7 98.5 L4 103.5 L1.5 115.5 Z" fill="#c7f7c8"/></svg><div class="n" style="left:0;top:0;right:0;bottom:0;border:1.5px solid #bff5c0;border-radius:1px"></div></div>
<div class="reg hd" style="left:935.5px;top:859.5px;width:7.0px;height:175.4px;background:#22c22a;border-color:#151515;border-radius:2px;"><div class="n" style="left:0;top:0;right:0;height:23px;background:#bff5c0"></div><div class="n" style="left:0.5px;top:85.9px;width:5.5px;height:10.3px;background:#1da424"></div><div class="n" style="left:0.5px;top:98.5px;width:5.5px;height:10.7px;background:#1da424"></div><svg class="n" style="left:0;top:0" width="7" height="175"><path d="M1.5 77.5 L4 89.5 L7 93.5 L8 95.5 L7 98.5 L4 103.5 L1.5 115.5 Z" fill="#c7f7c8"/></svg><div class="n" style="left:0;top:0;right:0;bottom:0;border:1.5px solid #bff5c0;border-radius:1px"></div></div>
<div class="reg hd" style="left:943.0px;top:859.5px;width:13.0px;height:175.4px;background:#22c22a;border-color:#151515;border-radius:2px;"><div class="n" style="left:0;top:0;right:0;height:23px;background:#bff5c0"></div><div class="n" style="left:-1.0px;top:85.9px;width:13.0px;height:10.3px;background:#1da424"></div><div class="n" style="left:-1.0px;top:98.5px;width:13.0px;height:10.7px;background:#1da424"></div><svg class="n" style="left:0;top:0" width="13" height="175"><path d="M1.5 77.5 L4 89.5 L7 93.5 L8 95.5 L7 98.5 L4 103.5 L1.5 115.5 Z" fill="#c7f7c8"/></svg><div class="n" style="left:0;top:0;right:0;bottom:0;border:1.5px solid #bff5c0;border-radius:1px"></div></div>
<div class="reg hd" style="left:1075.8px;top:859.5px;width:148.2px;height:175.4px;background:#22c22a;border-color:#151515;"><div class="n" style="left:0;top:0;right:0;height:23px;background:#bff5c0"></div><div class="n" style="left:1.1px;top:73.5px;width:59.1px;height:10.5px;background:#1da424"></div><div class="n" style="left:76.8px;top:73.5px;width:50.0px;height:10.5px;background:#1da424"></div><div class="n" style="left:21.2px;top:98.5px;width:2.6px;height:10.7px;background:#1da424"></div><div class="n" style="left:32.2px;top:98.5px;width:2.0px;height:10.7px;background:#1da424"></div><div class="n" style="left:41.2px;top:98.5px;width:8.0px;height:10.7px;background:#1da424"></div><div class="n" style="left:73.8px;top:98.5px;width:7.4px;height:10.7px;background:#1da424"></div><div class="n" style="left:108.7px;top:98.5px;width:38.5px;height:10.7px;background:#1da424"></div><div class="n" style="left:51.2px;top:110.5px;width:24.0px;height:11.4px;background:#1da424"></div><div class="n" style="left:83.8px;top:110.5px;width:21.4px;height:11.4px;background:#1da424"></div><div class="n" style="left:108.7px;top:110.5px;width:38.5px;height:11.4px;background:#1da424"></div><div class="n" style="left:0;top:0;right:0;bottom:0;border:1.5px solid #bff5c0;border-radius:4px"></div><div class="rt" style="color:#1f6a24;">VOICES</div></div>
<div class="reg hd" style="left:142.5px;top:1036.7px;width:10.0px;height:175.4px;background:#cc12cc;border-color:#151515;border-radius:2px;"><div class="n" style="left:0;top:0;right:0;height:23px;background:#f7c4f7"></div><svg class="n" style="left:0;top:0" width="10" height="175"><path d="M1.5 68.30000000000018 L3 78.30000000000018 L2.8 94.30000000000018 L4.5 98.30000000000018 L2.8 104.30000000000018 L3 134.30000000000018 L1.5 138.30000000000018 Z" fill="#f3a8f3"/><rect x="0" y="97.70000000000019" width="10.0" height="1.2" fill="#f3a8f3"/></svg><div class="n" style="left:0;top:0;right:0;bottom:0;border:1.5px solid #f7c4f7;border-radius:1px"></div></div>
<div class="reg hd" style="left:152.5px;top:1036.7px;width:10.0px;height:175.4px;background:#cc12cc;border-color:#151515;border-radius:2px;"><div class="n" style="left:0;top:0;right:0;height:23px;background:#f7c4f7"></div><svg class="n" style="left:0;top:0" width="10" height="175"><path d="M1.5 68.30000000000018 L3 78.30000000000018 L2.8 94.30000000000018 L4.5 98.30000000000018 L2.8 104.30000000000018 L3 134.30000000000018 L1.5 138.30000000000018 Z" fill="#f3a8f3"/><rect x="0" y="97.70000000000019" width="10.0" height="1.2" fill="#f3a8f3"/></svg><div class="n" style="left:0;top:0;right:0;bottom:0;border:1.5px solid #f7c4f7;border-radius:1px"></div></div>
<div class="reg hd" style="left:162.5px;top:1036.7px;width:10.0px;height:175.4px;background:#cc12cc;border-color:#151515;border-radius:2px;"><div class="n" style="left:0;top:0;right:0;height:23px;background:#f7c4f7"></div><svg class="n" style="left:0;top:0" width="10" height="175"><path d="M1.5 68.30000000000018 L3 78.30000000000018 L2.8 94.30000000000018 L4.5 98.30000000000018 L2.8 104.30000000000018 L3 134.30000000000018 L1.5 138.30000000000018 Z" fill="#f3a8f3"/><rect x="0" y="97.70000000000019" width="10.0" height="1.2" fill="#f3a8f3"/></svg><div class="n" style="left:0;top:0;right:0;bottom:0;border:1.5px solid #f7c4f7;border-radius:1px"></div></div>
<div class="reg hd" style="left:194.5px;top:1036.7px;width:10.0px;height:175.4px;background:#cc12cc;border-color:#151515;border-radius:2px;"><div class="n" style="left:0;top:0;right:0;height:23px;background:#f7c4f7"></div><svg class="n" style="left:0;top:0" width="10" height="175"><path d="M1.5 68.30000000000018 L3 78.30000000000018 L2.8 94.30000000000018 L4.5 98.30000000000018 L2.8 104.30000000000018 L3 134.30000000000018 L1.5 138.30000000000018 Z" fill="#f3a8f3"/><rect x="0" y="97.70000000000019" width="10.0" height="1.2" fill="#f3a8f3"/></svg><div class="n" style="left:0;top:0;right:0;bottom:0;border:1.5px solid #f7c4f7;border-radius:1px"></div></div>
<div class="reg hd" style="left:205.5px;top:1036.7px;width:10.0px;height:175.4px;background:#cc12cc;border-color:#151515;border-radius:2px;"><div class="n" style="left:0;top:0;right:0;height:23px;background:#f7c4f7"></div><svg class="n" style="left:0;top:0" width="10" height="175"><path d="M1.5 68.30000000000018 L3 78.30000000000018 L2.8 94.30000000000018 L4.5 98.30000000000018 L2.8 104.30000000000018 L3 134.30000000000018 L1.5 138.30000000000018 Z" fill="#f3a8f3"/><rect x="0" y="97.70000000000019" width="10.0" height="1.2" fill="#f3a8f3"/></svg><div class="n" style="left:0;top:0;right:0;bottom:0;border:1.5px solid #f7c4f7;border-radius:1px"></div></div>
<div class="reg hd" style="left:217.0px;top:1036.7px;width:10.0px;height:175.4px;background:#cc12cc;border-color:#151515;border-radius:2px;"><div class="n" style="left:0;top:0;right:0;height:23px;background:#f7c4f7"></div><svg class="n" style="left:0;top:0" width="10" height="175"><path d="M1.5 68.30000000000018 L3 78.30000000000018 L2.8 94.30000000000018 L4.5 98.30000000000018 L2.8 104.30000000000018 L3 134.30000000000018 L1.5 138.30000000000018 Z" fill="#f3a8f3"/><rect x="0" y="97.70000000000019" width="10" height="1.2" fill="#f3a8f3"/></svg><div class="n" style="left:0;top:0;right:0;bottom:0;border:1.5px solid #f7c4f7;border-radius:1px"></div></div>
<div class="reg hd" style="left:228.0px;top:1036.7px;width:10.0px;height:175.4px;background:#cc12cc;border-color:#151515;border-radius:2px;"><div class="n" style="left:0;top:0;right:0;height:23px;background:#f7c4f7"></div><svg class="n" style="left:0;top:0" width="10" height="175"><path d="M1.5 68.30000000000018 L3 78.30000000000018 L2.8 94.30000000000018 L4.5 98.30000000000018 L2.8 104.30000000000018 L3 134.30000000000018 L1.5 138.30000000000018 Z" fill="#f3a8f3"/><rect x="0" y="97.70000000000019" width="10" height="1.2" fill="#f3a8f3"/></svg><div class="n" style="left:0;top:0;right:0;bottom:0;border:1.5px solid #f7c4f7;border-radius:1px"></div></div>
<div class="reg hd" style="left:238.0px;top:1036.7px;width:10.5px;height:175.4px;background:#cc12cc;border-color:#151515;border-radius:2px;"><div class="n" style="left:0;top:0;right:0;height:23px;background:#f7c4f7"></div><svg class="n" style="left:0;top:0" width="10" height="175"><path d="M1.5 68.30000000000018 L3 78.30000000000018 L2.8 94.30000000000018 L4.5 98.30000000000018 L2.8 104.30000000000018 L3 134.30000000000018 L1.5 138.30000000000018 Z" fill="#f3a8f3"/><rect x="0" y="97.70000000000019" width="10.5" height="1.2" fill="#f3a8f3"/></svg><div class="n" style="left:0;top:0;right:0;bottom:0;border:1.5px solid #f7c4f7;border-radius:1px"></div></div>
<div class="reg hd" style="left:270.5px;top:1036.7px;width:10.0px;height:175.4px;background:#cc12cc;border-color:#151515;border-radius:2px;"><div class="n" style="left:0;top:0;right:0;height:23px;background:#f7c4f7"></div><svg class="n" style="left:0;top:0" width="10" height="175"><path d="M1.5 68.30000000000018 L3 78.30000000000018 L2.8 94.30000000000018 L4.5 98.30000000000018 L2.8 104.30000000000018 L3 134.30000000000018 L1.5 138.30000000000018 Z" fill="#f3a8f3"/><rect x="0" y="97.70000000000019" width="10.0" height="1.2" fill="#f3a8f3"/></svg><div class="n" style="left:0;top:0;right:0;bottom:0;border:1.5px solid #f7c4f7;border-radius:1px"></div></div>
<div class="reg hd" style="left:281.5px;top:1036.7px;width:19.0px;height:175.4px;background:#503586;border-color:#151515;"><div class="n" style="left:0;top:0;right:0;height:23px;background:#e0d1f8"></div><div class="n" style="left:-0.5px;top:73.3px;width:8.0px;height:14.0px;background:#442a74"></div><div class="n" style="left:-0.5px;top:111.3px;width:19.0px;height:11.0px;background:#442a74"></div><div class="n" style="left:0;top:0;right:0;bottom:0;border:1.5px solid #e0d1f8;border-radius:4px"></div></div>
<div class="reg hd" style="left:368.5px;top:1036.7px;width:262.0px;height:175.4px;background:#503586;border-color:#151515;"><div class="n" style="left:0;top:0;right:0;height:23.5px;background:#e0d1f8"></div><div class="n" style="left:21.5px;top:24.3px;width:92.0px;height:6.0px;background:#442a74"></div><div class="n" style="left:116.1px;top:24.3px;width:118.4px;height:6.0px;background:#442a74"></div><div class="n" style="left:21.5px;top:33.3px;width:92.0px;height:7.0px;background:#442a74"></div><div class="n" style="left:116.1px;top:33.3px;width:118.4px;height:7.0px;background:#442a74"></div><div class="n" style="left:-0.5px;top:69.9px;width:26.5px;height:7.4px;background:#442a74"></div><div class="n" style="left:-0.5px;top:78.3px;width:26.0px;height:6.8px;background:#442a74"></div><div class="n" style="left:21.5px;top:88.9px;width:47.0px;height:6.8px;background:#442a74"></div><div class="n" style="left:21.5px;top:98.3px;width:47.0px;height:6.5px;background:#442a74"></div><div class="n" style="left:58.2px;top:107.8px;width:65.1px;height:6.8px;background:#442a74"></div><div class="n" style="left:214.2px;top:107.8px;width:25.8px;height:6.8px;background:#442a74"></div><div class="n" style="left:233.5px;top:117.3px;width:27.0px;height:6.8px;background:#442a74"></div><div class="n" style="left:58.2px;top:162.8px;width:65.1px;height:6.5px;background:#442a74"></div><div class="n" style="left:0;top:0;right:0;bottom:0;border:1.5px solid #e0d1f8;border-radius:4px"></div><div class="rt" style="color:#3b2a6c;">MELODIC</div></div>
<div class="reg hd" style="left:631.0px;top:1036.7px;width:25.5px;height:175.4px;background:#962cd6;border-color:#151515;"><div class="n" style="left:0;top:0;right:0;height:23.5px;background:#e0d1f8"></div><div class="n" style="left:5.0px;top:87.0px;width:13.0px;height:9.3px;background:#7c23b3"></div><div class="n" style="left:0.0px;top:99.1px;width:4.0px;height:9.9px;background:#7c23b3"></div><div class="n" style="left:16.5px;top:99.1px;width:8.5px;height:9.9px;background:#7c23b3"></div><div class="n" style="left:0;top:0;right:0;bottom:0;border:1.5px solid #e0d1f8;border-radius:4px"></div><div class="rt" style="color:#3b2a6c;">M</div></div>
<div class="reg hd" style="left:657.5px;top:1036.7px;width:42.5px;height:175.4px;background:#962cd6;border-color:#151515;"><div class="n" style="left:0;top:0;right:0;height:23.5px;background:#e0d1f8"></div><div class="n" style="left:0.2px;top:87.0px;width:12.3px;height:9.3px;background:#7c23b3"></div><div class="n" style="left:21.5px;top:87.0px;width:13.0px;height:9.3px;background:#7c23b3"></div><div class="n" style="left:10.5px;top:99.1px;width:13.6px;height:9.9px;background:#7c23b3"></div><div class="n" style="left:31.5px;top:99.1px;width:10.0px;height:9.9px;background:#7c23b3"></div><div class="n" style="left:0;top:0;right:0;bottom:0;border:1.5px solid #e0d1f8;border-radius:4px"></div><div class="rt" style="color:#3b2a6c;">MEL</div></div>
<div class="reg hd" style="left:701.0px;top:1036.7px;width:85.0px;height:175.4px;background:#962cd6;border-color:#151515;"><div class="n" style="left:0;top:0;right:0;height:23.5px;background:#e0d1f8"></div><div class="n" style="left:7.0px;top:54.8px;width:28.0px;height:11.4px;background:#7c23b3"></div><div class="n" style="left:64.0px;top:54.8px;width:12.0px;height:11.4px;background:#7c23b3"></div><div class="n" style="left:31.0px;top:67.3px;width:10.0px;height:11.0px;background:#7c23b3"></div><div class="n" style="left:75.0px;top:67.3px;width:9.0px;height:11.0px;background:#7c23b3"></div><div class="n" style="left:35.0px;top:80.3px;width:10.0px;height:10.5px;background:#7c23b3"></div><div class="n" style="left:-0.5px;top:92.3px;width:10.2px;height:10.6px;background:#7c23b3"></div><div class="n" style="left:4.0px;top:104.0px;width:8.8px;height:11.3px;background:#7c23b3"></div><div class="n" style="left:32.5px;top:129.3px;width:49.2px;height:10.7px;background:#7c23b3"></div><div class="n" style="left:0;top:0;right:0;bottom:0;border:1.5px solid #e0d1f8;border-radius:4px"></div><div class="rt" style="color:#3b2a6c;">MELODIC</div></div>
<div class="reg hd" style="left:786.5px;top:1036.7px;width:42.0px;height:175.4px;background:#962cd6;border-color:#151515;"><div class="n" style="left:0;top:0;right:0;height:23.5px;background:#e0d1f8"></div><div class="n" style="left:0.0px;top:87.0px;width:13.2px;height:9.3px;background:#7c23b3"></div><div class="n" style="left:21.5px;top:87.0px;width:13.0px;height:9.3px;background:#7c23b3"></div><div class="n" style="left:10.5px;top:99.1px;width:13.0px;height:9.9px;background:#7c23b3"></div><div class="n" style="left:31.1px;top:99.1px;width:10.4px;height:9.9px;background:#7c23b3"></div><div class="n" style="left:0;top:0;right:0;bottom:0;border:1.5px solid #e0d1f8;border-radius:4px"></div><div class="rt" style="color:#3b2a6c;">MEL</div></div>
<div class="reg hd" style="left:840.5px;top:1036.7px;width:129.0px;height:175.4px;background:#503586;border-color:#151515;"><div class="n" style="left:0;top:0;right:0;height:23.5px;background:#e0d1f8"></div><div class="n" style="left:-0.5px;top:48.0px;width:129.0px;height:12.3px;background:#442a74"></div><div class="n" style="left:42.3px;top:135.3px;width:9.2px;height:11.0px;background:#442a74"></div><div class="n" style="left:62.0px;top:135.3px;width:14.5px;height:11.0px;background:#442a74"></div><div class="n" style="left:85.0px;top:135.3px;width:11.1px;height:11.0px;background:#442a74"></div><div class="n" style="left:108.0px;top:135.3px;width:9.3px;height:11.0px;background:#442a74"></div><div class="n" style="left:0;top:0;right:0;bottom:0;border:1.5px solid #e0d1f8;border-radius:4px"></div><div class="rt" style="color:#3b2a6c;">MELODIC</div></div>
<div class="reg hd" style="left:970.0px;top:1036.7px;width:360.0px;height:175.4px;background:#503586;border-color:#151515;"><div class="n" style="left:0;top:0;right:0;height:23.5px;background:#e0d1f8"></div><div class="n" style="left:18.6px;top:23.8px;width:43.8px;height:4.9px;background:#442a74"></div><div class="n" style="left:64.3px;top:23.8px;width:46.4px;height:4.9px;background:#442a74"></div><div class="n" style="left:251.7px;top:30.5px;width:44.3px;height:5.6px;background:#442a74"></div><div class="n" style="left:299.0px;top:30.5px;width:42.6px;height:5.6px;background:#442a74"></div><div class="n" style="left:343.0px;top:30.5px;width:16.0px;height:5.6px;background:#442a74"></div><div class="n" style="left:339.0px;top:38.7px;width:20.0px;height:4.8px;background:#442a74"></div><div class="n" style="left:18.6px;top:52.8px;width:43.8px;height:6.3px;background:#442a74"></div><div class="n" style="left:64.3px;top:52.8px;width:53.7px;height:6.3px;background:#442a74"></div><div class="n" style="left:0.0px;top:113.7px;width:126.0px;height:5.9px;background:#442a74"></div><div class="n" style="left:129.0px;top:113.7px;width:126.4px;height:5.9px;background:#442a74"></div><div class="n" style="left:127.0px;top:121.5px;width:111.0px;height:5.2px;background:#442a74"></div><div class="n" style="left:240.6px;top:151.2px;width:24.8px;height:5.5px;background:#442a74"></div><div class="n" style="left:266.6px;top:165.3px;width:10.0px;height:6.0px;background:#442a74"></div><div class="n" style="left:286.6px;top:165.3px;width:14.1px;height:6.0px;background:#442a74"></div><div class="n" style="left:310.0px;top:165.3px;width:11.0px;height:6.0px;background:#442a74"></div><div class="n" style="left:331.0px;top:165.3px;width:10.6px;height:6.0px;background:#442a74"></div><div class="n" style="left:0;top:0;right:0;bottom:0;border:1.5px solid #e0d1f8;border-radius:4px"></div><div class="rt" style="color:#3b2a6c;">MELODIC</div></div>
</body></html>
